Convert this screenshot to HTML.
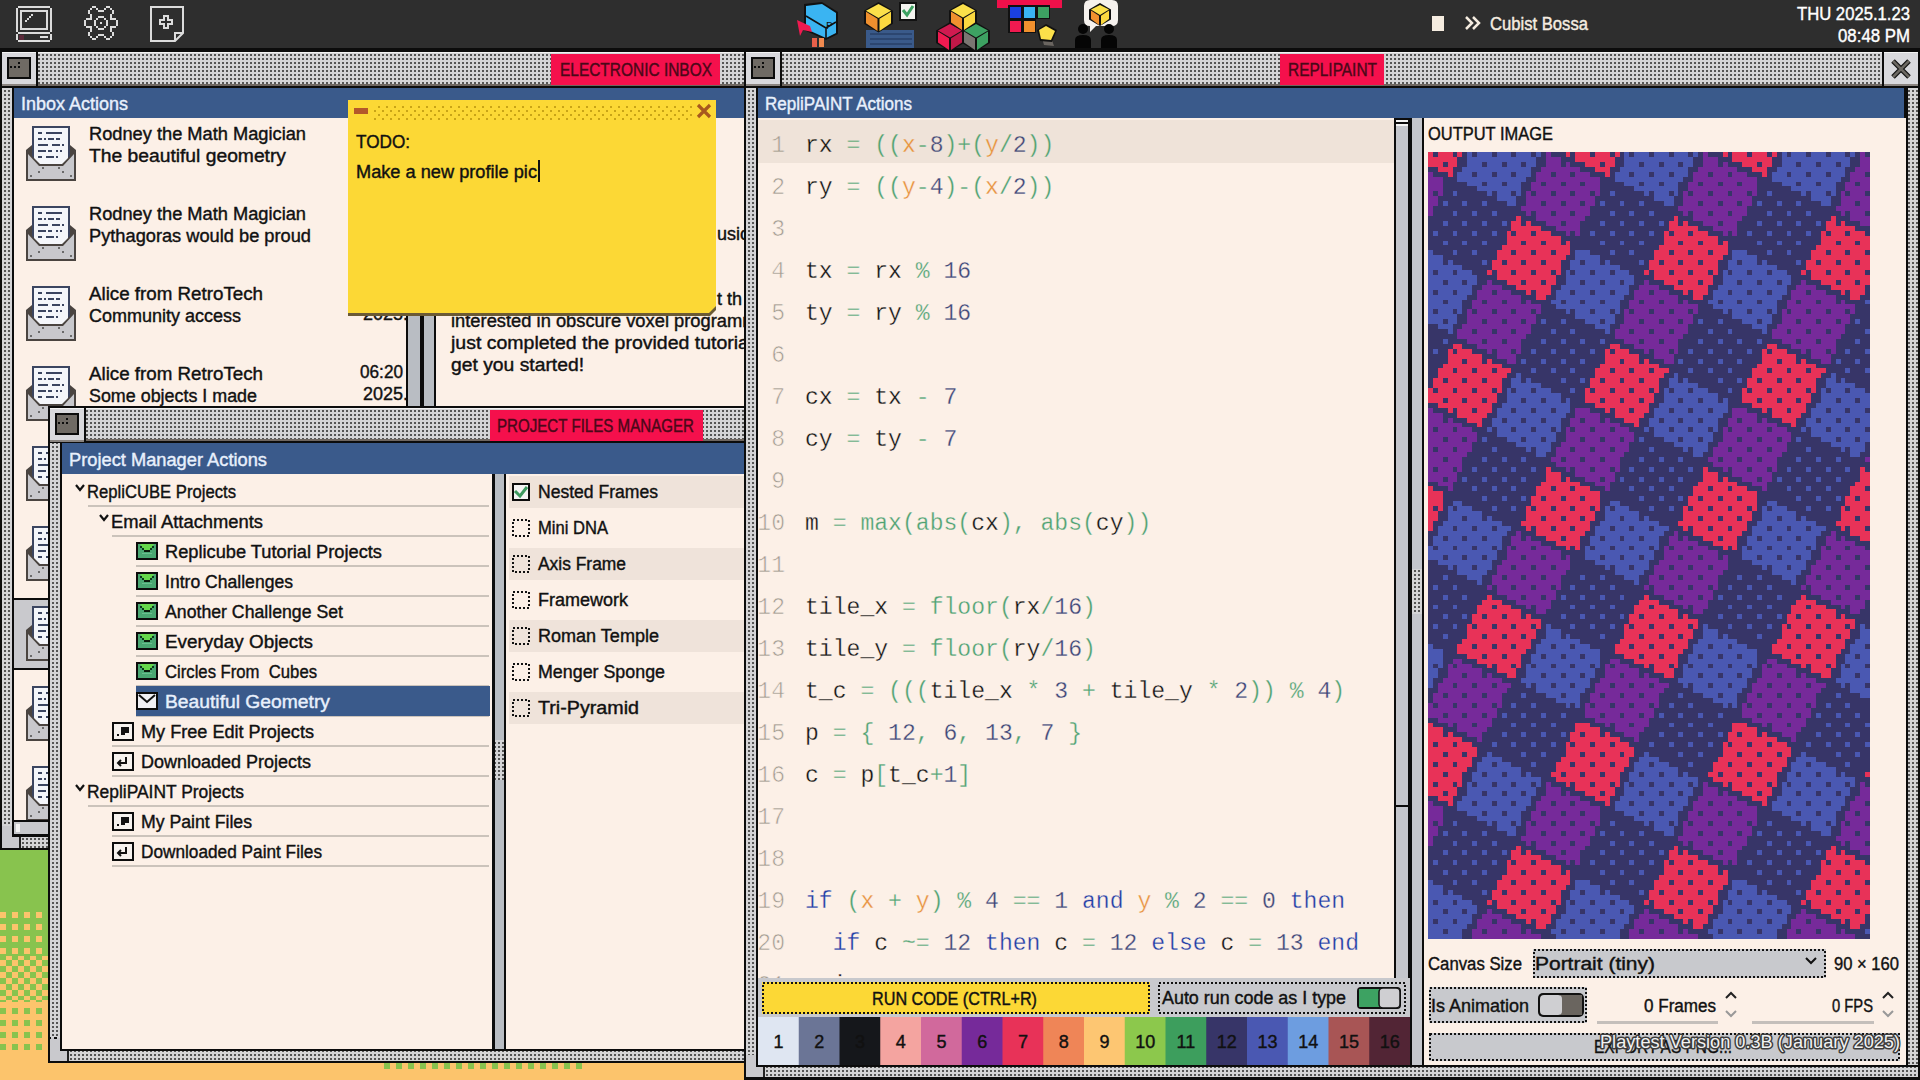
<!DOCTYPE html>
<html><head><meta charset="utf-8"><title>RepliPAINT Desktop</title>
<style>html,body{margin:0;padding:0;width:1920px;height:1080px;overflow:hidden;background:#2e2e2e;font-family:"Liberation Sans",sans-serif}svg{display:block}</style>
</head><body><svg width="1920" height="1080" viewBox="0 0 1920 1080"><defs>
<pattern id="dots" width="4" height="4" patternUnits="userSpaceOnUse"><rect width="4" height="4" fill="#d4d4d6"/><rect x="2" y="2" width="2" height="2" fill="#555"/></pattern>
<pattern id="dotsv" width="4" height="4" patternUnits="userSpaceOnUse"><rect width="4" height="4" fill="#d4d4d6"/><rect x="0" y="2" width="2" height="2" fill="#555"/></pattern>
<pattern id="ydots" width="8" height="8" patternUnits="userSpaceOnUse"><rect width="8" height="8" fill="#fcd835"/><rect x="2" y="2" width="2" height="2" fill="#c9a416"/><rect x="6" y="6" width="2" height="2" fill="#c9a416"/></pattern>
<pattern id="dfill" width="6" height="2" patternUnits="userSpaceOnUse"><rect width="3" height="2" fill="#111"/></pattern>
<pattern id="orgdots" width="12" height="12" patternUnits="userSpaceOnUse"><rect width="12" height="12" fill="#88c34e"/><rect x="0" y="0" width="6" height="6" fill="#fcc46c"/></pattern>
<pattern id="checker" width="12" height="12" patternUnits="userSpaceOnUse"><rect width="12" height="12" fill="#88c34e"/><rect x="0" y="0" width="6" height="6" fill="#fcc46c"/><rect x="6" y="6" width="6" height="6" fill="#fcc46c"/></pattern>
<pattern id="grndots" width="12" height="12" patternUnits="userSpaceOnUse"><rect width="12" height="12" fill="#fcc46c"/><rect x="0" y="0" width="6" height="6" fill="#88c34e"/></pattern>
<clipPath id="inboxclip"><rect x="14" y="118" width="730" height="702"/></clipPath>
<clipPath id="dateclip"><rect x="14" y="118" width="392" height="702"/></clipPath>
<clipPath id="codeclip"><rect x="758" y="118" width="636" height="860"/></clipPath>
</defs><rect x="0" y="0" width="1920" height="1080" fill="#fcc46c" /><rect x="0" y="850" width="48" height="62" fill="#88c34e" /><rect x="0" y="912" width="48" height="44" fill="url(#orgdots)" /><rect x="0" y="956" width="48" height="44" fill="url(#checker)" /><rect x="0" y="1000" width="48" height="56" fill="url(#grndots)" /><rect x="384" y="1063" width="6" height="6" fill="#88c34e" /><rect x="396" y="1063" width="6" height="6" fill="#88c34e" /><rect x="408" y="1063" width="6" height="6" fill="#88c34e" /><rect x="420" y="1063" width="6" height="6" fill="#88c34e" /><rect x="432" y="1063" width="6" height="6" fill="#88c34e" /><rect x="444" y="1063" width="6" height="6" fill="#88c34e" /><rect x="456" y="1063" width="6" height="6" fill="#88c34e" /><rect x="468" y="1063" width="6" height="6" fill="#88c34e" /><rect x="480" y="1063" width="6" height="6" fill="#88c34e" /><rect x="492" y="1063" width="6" height="6" fill="#88c34e" /><rect x="504" y="1063" width="6" height="6" fill="#88c34e" /><rect x="516" y="1063" width="6" height="6" fill="#88c34e" /><rect x="528" y="1063" width="6" height="6" fill="#88c34e" /><rect x="540" y="1063" width="6" height="6" fill="#88c34e" /><rect x="552" y="1063" width="6" height="6" fill="#88c34e" /><rect x="564" y="1063" width="6" height="6" fill="#88c34e" /><rect x="576" y="1063" width="6" height="6" fill="#88c34e" /><rect x="0" y="0" width="1920" height="48" fill="#2e2e2e" /><rect x="0" y="48" width="1920" height="4" fill="#0c0c0c" /><rect x="0" y="48" width="746" height="802" fill="#0c0c0c" /><rect x="2" y="52" width="742" height="34" fill="url(#dots)" /><rect x="2" y="52" width="742" height="1" fill="#f2f2f2" /><rect x="2" y="84" width="742" height="2" fill="#6e6660" /><rect x="2" y="52" width="34" height="34" fill="#d9d9dd" /><rect x="2" y="52" width="34" height="1" fill="#f4f4f4" /><rect x="2" y="84" width="34" height="2" fill="#8a8480" /><rect x="7" y="57" width="24" height="22" fill="#0c0c0c" /><rect x="9" y="59" width="20" height="18" fill="#6f6a64" /><rect x="14" y="66" width="2" height="2" fill="#0c0c0c" /><rect x="18" y="66" width="2" height="2" fill="#0c0c0c" /><rect x="18" y="62" width="2" height="2" fill="#0c0c0c" /><rect x="10" y="66" width="2" height="2" fill="#0c0c0c" /><rect x="36" y="52" width="2" height="34" fill="#0c0c0c" /><rect x="551" y="54" width="169" height="31" fill="#f5104c" /><text x="560" y="76" font-family="Liberation Sans" font-size="18" fill="#4a0818" textLength="152" lengthAdjust="spacingAndGlyphs"  stroke="#4a0818" stroke-width="0.4">ELECTRONIC INBOX</text><rect x="2" y="88" width="10" height="749" fill="url(#dotsv)" /><rect x="14" y="88" width="730" height="30" fill="#3a5a8b" /><text x="21" y="110" font-family="Liberation Sans" font-size="18" fill="#e8f0fc" textLength="107" lengthAdjust="spacingAndGlyphs"  stroke="#e8f0fc" stroke-width="0.4">Inbox Actions</text><rect x="14" y="118" width="730" height="702" fill="#fcf0e7" /><rect x="14" y="822" width="730" height="12" fill="#c7c8cc" /><rect x="16" y="824" width="4" height="8" fill="#f4f4f4" /><rect x="14" y="834" width="730" height="3" fill="#0c0c0c" /><rect x="2" y="837" width="742" height="11" fill="url(#dots)" /><rect x="2" y="826" width="10" height="22" fill="#c9c9cd" /><rect x="2" y="837" width="18" height="11" fill="#c9c9cd" /><rect x="19" y="837" width="2" height="11" fill="#222" /><rect x="12" y="820" width="2" height="17" fill="#0c0c0c" /><g clip-path="url(#inboxclip)"><rect x="14" y="598" width="392" height="72" fill="#c9c9cd" /><rect x="14" y="598" width="392" height="2" fill="#0c0c0c" /><rect x="14" y="668" width="392" height="2" fill="#0c0c0c" /><path d="M26 150 L32 145 L70 145 L76 150 L76 159 L26 159 Z" fill="#4a4440"/><rect x="32" y="126" width="38" height="40" fill="#3b4560" /><rect x="34" y="128" width="34" height="38" fill="#f4f6fa" /><rect x="38" y="132" width="4" height="2" fill="#3b4560" /><rect x="46" y="132" width="16" height="2" fill="#3b4560" /><rect x="38" y="138" width="4" height="2" fill="#3b4560" /><rect x="44" y="138" width="2" height="2" fill="#3b4560" /><rect x="48" y="138" width="6" height="2" fill="#3b4560" /><rect x="56" y="138" width="4" height="2" fill="#3b4560" /><rect x="38" y="144" width="10" height="2" fill="#3b4560" /><rect x="52" y="144" width="8" height="2" fill="#3b4560" /><rect x="62" y="144" width="2" height="2" fill="#3b4560" /><rect x="38" y="150" width="8" height="2" fill="#3b4560" /><rect x="48" y="150" width="4" height="2" fill="#3b4560" /><rect x="56" y="150" width="2" height="2" fill="#3b4560" /><rect x="60" y="150" width="2" height="2" fill="#3b4560" /><rect x="38" y="156" width="4" height="2" fill="#3b4560" /><rect x="46" y="156" width="8" height="2" fill="#3b4560" /><rect x="56" y="156" width="2" height="2" fill="#3b4560" /><path d="M26 150 L40 164 L62 164 L76 150 L76 181 L26 181 Z" fill="#4a4440"/><path d="M28 154 L39 166 L63 166 L74 154 L74 179 L28 179 Z" fill="#c8c8cc"/><rect x="30" y="175" width="2" height="2" fill="#6a6a6a" /><rect x="38" y="171" width="2" height="2" fill="#6a6a6a" /><rect x="42" y="167" width="2" height="2" fill="#6a6a6a" /><rect x="70" y="175" width="2" height="2" fill="#6a6a6a" /><rect x="62" y="171" width="2" height="2" fill="#6a6a6a" /><rect x="58" y="167" width="2" height="2" fill="#6a6a6a" /><text x="89" y="140" font-family="Liberation Sans" font-size="18" fill="#111" textLength="217" lengthAdjust="spacingAndGlyphs"  stroke="#111" stroke-width="0.4">Rodney the Math Magician</text><text x="89" y="162" font-family="Liberation Sans" font-size="18" fill="#111" textLength="197" lengthAdjust="spacingAndGlyphs"  stroke="#111" stroke-width="0.4">The beautiful geometry</text><path d="M26 230 L32 225 L70 225 L76 230 L76 239 L26 239 Z" fill="#4a4440"/><rect x="32" y="206" width="38" height="40" fill="#3b4560" /><rect x="34" y="208" width="34" height="38" fill="#f4f6fa" /><rect x="38" y="212" width="4" height="2" fill="#3b4560" /><rect x="46" y="212" width="16" height="2" fill="#3b4560" /><rect x="38" y="218" width="4" height="2" fill="#3b4560" /><rect x="44" y="218" width="2" height="2" fill="#3b4560" /><rect x="48" y="218" width="6" height="2" fill="#3b4560" /><rect x="56" y="218" width="4" height="2" fill="#3b4560" /><rect x="38" y="224" width="10" height="2" fill="#3b4560" /><rect x="52" y="224" width="8" height="2" fill="#3b4560" /><rect x="62" y="224" width="2" height="2" fill="#3b4560" /><rect x="38" y="230" width="8" height="2" fill="#3b4560" /><rect x="48" y="230" width="4" height="2" fill="#3b4560" /><rect x="56" y="230" width="2" height="2" fill="#3b4560" /><rect x="60" y="230" width="2" height="2" fill="#3b4560" /><rect x="38" y="236" width="4" height="2" fill="#3b4560" /><rect x="46" y="236" width="8" height="2" fill="#3b4560" /><rect x="56" y="236" width="2" height="2" fill="#3b4560" /><path d="M26 230 L40 244 L62 244 L76 230 L76 261 L26 261 Z" fill="#4a4440"/><path d="M28 234 L39 246 L63 246 L74 234 L74 259 L28 259 Z" fill="#c8c8cc"/><rect x="30" y="255" width="2" height="2" fill="#6a6a6a" /><rect x="38" y="251" width="2" height="2" fill="#6a6a6a" /><rect x="42" y="247" width="2" height="2" fill="#6a6a6a" /><rect x="70" y="255" width="2" height="2" fill="#6a6a6a" /><rect x="62" y="251" width="2" height="2" fill="#6a6a6a" /><rect x="58" y="247" width="2" height="2" fill="#6a6a6a" /><text x="89" y="220" font-family="Liberation Sans" font-size="18" fill="#111" textLength="217" lengthAdjust="spacingAndGlyphs"  stroke="#111" stroke-width="0.4">Rodney the Math Magician</text><text x="89" y="242" font-family="Liberation Sans" font-size="18" fill="#111" textLength="222" lengthAdjust="spacingAndGlyphs"  stroke="#111" stroke-width="0.4">Pythagoras would be proud</text><path d="M26 310 L32 305 L70 305 L76 310 L76 319 L26 319 Z" fill="#4a4440"/><rect x="32" y="286" width="38" height="40" fill="#3b4560" /><rect x="34" y="288" width="34" height="38" fill="#f4f6fa" /><rect x="38" y="292" width="4" height="2" fill="#3b4560" /><rect x="46" y="292" width="16" height="2" fill="#3b4560" /><rect x="38" y="298" width="4" height="2" fill="#3b4560" /><rect x="44" y="298" width="2" height="2" fill="#3b4560" /><rect x="48" y="298" width="6" height="2" fill="#3b4560" /><rect x="56" y="298" width="4" height="2" fill="#3b4560" /><rect x="38" y="304" width="10" height="2" fill="#3b4560" /><rect x="52" y="304" width="8" height="2" fill="#3b4560" /><rect x="62" y="304" width="2" height="2" fill="#3b4560" /><rect x="38" y="310" width="8" height="2" fill="#3b4560" /><rect x="48" y="310" width="4" height="2" fill="#3b4560" /><rect x="56" y="310" width="2" height="2" fill="#3b4560" /><rect x="60" y="310" width="2" height="2" fill="#3b4560" /><rect x="38" y="316" width="4" height="2" fill="#3b4560" /><rect x="46" y="316" width="8" height="2" fill="#3b4560" /><rect x="56" y="316" width="2" height="2" fill="#3b4560" /><path d="M26 310 L40 324 L62 324 L76 310 L76 341 L26 341 Z" fill="#4a4440"/><path d="M28 314 L39 326 L63 326 L74 314 L74 339 L28 339 Z" fill="#c8c8cc"/><rect x="30" y="335" width="2" height="2" fill="#6a6a6a" /><rect x="38" y="331" width="2" height="2" fill="#6a6a6a" /><rect x="42" y="327" width="2" height="2" fill="#6a6a6a" /><rect x="70" y="335" width="2" height="2" fill="#6a6a6a" /><rect x="62" y="331" width="2" height="2" fill="#6a6a6a" /><rect x="58" y="327" width="2" height="2" fill="#6a6a6a" /><text x="89" y="300" font-family="Liberation Sans" font-size="18" fill="#111" textLength="174" lengthAdjust="spacingAndGlyphs"  stroke="#111" stroke-width="0.4">Alice from RetroTech</text><text x="89" y="322" font-family="Liberation Sans" font-size="18" fill="#111" textLength="152" lengthAdjust="spacingAndGlyphs"  stroke="#111" stroke-width="0.4">Community access</text><path d="M26 390 L32 385 L70 385 L76 390 L76 399 L26 399 Z" fill="#4a4440"/><rect x="32" y="366" width="38" height="40" fill="#3b4560" /><rect x="34" y="368" width="34" height="38" fill="#f4f6fa" /><rect x="38" y="372" width="4" height="2" fill="#3b4560" /><rect x="46" y="372" width="16" height="2" fill="#3b4560" /><rect x="38" y="378" width="4" height="2" fill="#3b4560" /><rect x="44" y="378" width="2" height="2" fill="#3b4560" /><rect x="48" y="378" width="6" height="2" fill="#3b4560" /><rect x="56" y="378" width="4" height="2" fill="#3b4560" /><rect x="38" y="384" width="10" height="2" fill="#3b4560" /><rect x="52" y="384" width="8" height="2" fill="#3b4560" /><rect x="62" y="384" width="2" height="2" fill="#3b4560" /><rect x="38" y="390" width="8" height="2" fill="#3b4560" /><rect x="48" y="390" width="4" height="2" fill="#3b4560" /><rect x="56" y="390" width="2" height="2" fill="#3b4560" /><rect x="60" y="390" width="2" height="2" fill="#3b4560" /><rect x="38" y="396" width="4" height="2" fill="#3b4560" /><rect x="46" y="396" width="8" height="2" fill="#3b4560" /><rect x="56" y="396" width="2" height="2" fill="#3b4560" /><path d="M26 390 L40 404 L62 404 L76 390 L76 421 L26 421 Z" fill="#4a4440"/><path d="M28 394 L39 406 L63 406 L74 394 L74 419 L28 419 Z" fill="#c8c8cc"/><rect x="30" y="415" width="2" height="2" fill="#6a6a6a" /><rect x="38" y="411" width="2" height="2" fill="#6a6a6a" /><rect x="42" y="407" width="2" height="2" fill="#6a6a6a" /><rect x="70" y="415" width="2" height="2" fill="#6a6a6a" /><rect x="62" y="411" width="2" height="2" fill="#6a6a6a" /><rect x="58" y="407" width="2" height="2" fill="#6a6a6a" /><text x="89" y="380" font-family="Liberation Sans" font-size="18" fill="#111" textLength="174" lengthAdjust="spacingAndGlyphs"  stroke="#111" stroke-width="0.4">Alice from RetroTech</text><text x="89" y="402" font-family="Liberation Sans" font-size="18" fill="#111" textLength="168" lengthAdjust="spacingAndGlyphs"  stroke="#111" stroke-width="0.4">Some objects I made</text><path d="M26 470 L32 465 L70 465 L76 470 L76 479 L26 479 Z" fill="#4a4440"/><rect x="32" y="446" width="38" height="40" fill="#3b4560" /><rect x="34" y="448" width="34" height="38" fill="#f4f6fa" /><rect x="38" y="452" width="4" height="2" fill="#3b4560" /><rect x="46" y="452" width="16" height="2" fill="#3b4560" /><rect x="38" y="458" width="4" height="2" fill="#3b4560" /><rect x="44" y="458" width="2" height="2" fill="#3b4560" /><rect x="48" y="458" width="6" height="2" fill="#3b4560" /><rect x="56" y="458" width="4" height="2" fill="#3b4560" /><rect x="38" y="464" width="10" height="2" fill="#3b4560" /><rect x="52" y="464" width="8" height="2" fill="#3b4560" /><rect x="62" y="464" width="2" height="2" fill="#3b4560" /><rect x="38" y="470" width="8" height="2" fill="#3b4560" /><rect x="48" y="470" width="4" height="2" fill="#3b4560" /><rect x="56" y="470" width="2" height="2" fill="#3b4560" /><rect x="60" y="470" width="2" height="2" fill="#3b4560" /><rect x="38" y="476" width="4" height="2" fill="#3b4560" /><rect x="46" y="476" width="8" height="2" fill="#3b4560" /><rect x="56" y="476" width="2" height="2" fill="#3b4560" /><path d="M26 470 L40 484 L62 484 L76 470 L76 501 L26 501 Z" fill="#4a4440"/><path d="M28 474 L39 486 L63 486 L74 474 L74 499 L28 499 Z" fill="#c8c8cc"/><rect x="30" y="495" width="2" height="2" fill="#6a6a6a" /><rect x="38" y="491" width="2" height="2" fill="#6a6a6a" /><rect x="42" y="487" width="2" height="2" fill="#6a6a6a" /><rect x="70" y="495" width="2" height="2" fill="#6a6a6a" /><rect x="62" y="491" width="2" height="2" fill="#6a6a6a" /><rect x="58" y="487" width="2" height="2" fill="#6a6a6a" /><path d="M26 550 L32 545 L70 545 L76 550 L76 559 L26 559 Z" fill="#4a4440"/><rect x="32" y="526" width="38" height="40" fill="#3b4560" /><rect x="34" y="528" width="34" height="38" fill="#f4f6fa" /><rect x="38" y="532" width="4" height="2" fill="#3b4560" /><rect x="46" y="532" width="16" height="2" fill="#3b4560" /><rect x="38" y="538" width="4" height="2" fill="#3b4560" /><rect x="44" y="538" width="2" height="2" fill="#3b4560" /><rect x="48" y="538" width="6" height="2" fill="#3b4560" /><rect x="56" y="538" width="4" height="2" fill="#3b4560" /><rect x="38" y="544" width="10" height="2" fill="#3b4560" /><rect x="52" y="544" width="8" height="2" fill="#3b4560" /><rect x="62" y="544" width="2" height="2" fill="#3b4560" /><rect x="38" y="550" width="8" height="2" fill="#3b4560" /><rect x="48" y="550" width="4" height="2" fill="#3b4560" /><rect x="56" y="550" width="2" height="2" fill="#3b4560" /><rect x="60" y="550" width="2" height="2" fill="#3b4560" /><rect x="38" y="556" width="4" height="2" fill="#3b4560" /><rect x="46" y="556" width="8" height="2" fill="#3b4560" /><rect x="56" y="556" width="2" height="2" fill="#3b4560" /><path d="M26 550 L40 564 L62 564 L76 550 L76 581 L26 581 Z" fill="#4a4440"/><path d="M28 554 L39 566 L63 566 L74 554 L74 579 L28 579 Z" fill="#c8c8cc"/><rect x="30" y="575" width="2" height="2" fill="#6a6a6a" /><rect x="38" y="571" width="2" height="2" fill="#6a6a6a" /><rect x="42" y="567" width="2" height="2" fill="#6a6a6a" /><rect x="70" y="575" width="2" height="2" fill="#6a6a6a" /><rect x="62" y="571" width="2" height="2" fill="#6a6a6a" /><rect x="58" y="567" width="2" height="2" fill="#6a6a6a" /><path d="M26 630 L32 625 L70 625 L76 630 L76 639 L26 639 Z" fill="#4a4440"/><rect x="32" y="606" width="38" height="40" fill="#3b4560" /><rect x="34" y="608" width="34" height="38" fill="#f4f6fa" /><rect x="38" y="612" width="4" height="2" fill="#3b4560" /><rect x="46" y="612" width="16" height="2" fill="#3b4560" /><rect x="38" y="618" width="4" height="2" fill="#3b4560" /><rect x="44" y="618" width="2" height="2" fill="#3b4560" /><rect x="48" y="618" width="6" height="2" fill="#3b4560" /><rect x="56" y="618" width="4" height="2" fill="#3b4560" /><rect x="38" y="624" width="10" height="2" fill="#3b4560" /><rect x="52" y="624" width="8" height="2" fill="#3b4560" /><rect x="62" y="624" width="2" height="2" fill="#3b4560" /><rect x="38" y="630" width="8" height="2" fill="#3b4560" /><rect x="48" y="630" width="4" height="2" fill="#3b4560" /><rect x="56" y="630" width="2" height="2" fill="#3b4560" /><rect x="60" y="630" width="2" height="2" fill="#3b4560" /><rect x="38" y="636" width="4" height="2" fill="#3b4560" /><rect x="46" y="636" width="8" height="2" fill="#3b4560" /><rect x="56" y="636" width="2" height="2" fill="#3b4560" /><path d="M26 630 L40 644 L62 644 L76 630 L76 661 L26 661 Z" fill="#4a4440"/><path d="M28 634 L39 646 L63 646 L74 634 L74 659 L28 659 Z" fill="#c8c8cc"/><rect x="30" y="655" width="2" height="2" fill="#6a6a6a" /><rect x="38" y="651" width="2" height="2" fill="#6a6a6a" /><rect x="42" y="647" width="2" height="2" fill="#6a6a6a" /><rect x="70" y="655" width="2" height="2" fill="#6a6a6a" /><rect x="62" y="651" width="2" height="2" fill="#6a6a6a" /><rect x="58" y="647" width="2" height="2" fill="#6a6a6a" /><path d="M26 710 L32 705 L70 705 L76 710 L76 719 L26 719 Z" fill="#4a4440"/><rect x="32" y="686" width="38" height="40" fill="#3b4560" /><rect x="34" y="688" width="34" height="38" fill="#f4f6fa" /><rect x="38" y="692" width="4" height="2" fill="#3b4560" /><rect x="46" y="692" width="16" height="2" fill="#3b4560" /><rect x="38" y="698" width="4" height="2" fill="#3b4560" /><rect x="44" y="698" width="2" height="2" fill="#3b4560" /><rect x="48" y="698" width="6" height="2" fill="#3b4560" /><rect x="56" y="698" width="4" height="2" fill="#3b4560" /><rect x="38" y="704" width="10" height="2" fill="#3b4560" /><rect x="52" y="704" width="8" height="2" fill="#3b4560" /><rect x="62" y="704" width="2" height="2" fill="#3b4560" /><rect x="38" y="710" width="8" height="2" fill="#3b4560" /><rect x="48" y="710" width="4" height="2" fill="#3b4560" /><rect x="56" y="710" width="2" height="2" fill="#3b4560" /><rect x="60" y="710" width="2" height="2" fill="#3b4560" /><rect x="38" y="716" width="4" height="2" fill="#3b4560" /><rect x="46" y="716" width="8" height="2" fill="#3b4560" /><rect x="56" y="716" width="2" height="2" fill="#3b4560" /><path d="M26 710 L40 724 L62 724 L76 710 L76 741 L26 741 Z" fill="#4a4440"/><path d="M28 714 L39 726 L63 726 L74 714 L74 739 L28 739 Z" fill="#c8c8cc"/><rect x="30" y="735" width="2" height="2" fill="#6a6a6a" /><rect x="38" y="731" width="2" height="2" fill="#6a6a6a" /><rect x="42" y="727" width="2" height="2" fill="#6a6a6a" /><rect x="70" y="735" width="2" height="2" fill="#6a6a6a" /><rect x="62" y="731" width="2" height="2" fill="#6a6a6a" /><rect x="58" y="727" width="2" height="2" fill="#6a6a6a" /><path d="M26 790 L32 785 L70 785 L76 790 L76 799 L26 799 Z" fill="#4a4440"/><rect x="32" y="766" width="38" height="40" fill="#3b4560" /><rect x="34" y="768" width="34" height="38" fill="#f4f6fa" /><rect x="38" y="772" width="4" height="2" fill="#3b4560" /><rect x="46" y="772" width="16" height="2" fill="#3b4560" /><rect x="38" y="778" width="4" height="2" fill="#3b4560" /><rect x="44" y="778" width="2" height="2" fill="#3b4560" /><rect x="48" y="778" width="6" height="2" fill="#3b4560" /><rect x="56" y="778" width="4" height="2" fill="#3b4560" /><rect x="38" y="784" width="10" height="2" fill="#3b4560" /><rect x="52" y="784" width="8" height="2" fill="#3b4560" /><rect x="62" y="784" width="2" height="2" fill="#3b4560" /><rect x="38" y="790" width="8" height="2" fill="#3b4560" /><rect x="48" y="790" width="4" height="2" fill="#3b4560" /><rect x="56" y="790" width="2" height="2" fill="#3b4560" /><rect x="60" y="790" width="2" height="2" fill="#3b4560" /><rect x="38" y="796" width="4" height="2" fill="#3b4560" /><rect x="46" y="796" width="8" height="2" fill="#3b4560" /><rect x="56" y="796" width="2" height="2" fill="#3b4560" /><path d="M26 790 L40 804 L62 804 L76 790 L76 821 L26 821 Z" fill="#4a4440"/><path d="M28 794 L39 806 L63 806 L74 794 L74 819 L28 819 Z" fill="#c8c8cc"/><rect x="30" y="815" width="2" height="2" fill="#6a6a6a" /><rect x="38" y="811" width="2" height="2" fill="#6a6a6a" /><rect x="42" y="807" width="2" height="2" fill="#6a6a6a" /><rect x="70" y="815" width="2" height="2" fill="#6a6a6a" /><rect x="62" y="811" width="2" height="2" fill="#6a6a6a" /><rect x="58" y="807" width="2" height="2" fill="#6a6a6a" /><g clip-path="url(#dateclip)"><text x="360" y="378" font-family="Liberation Sans" font-size="18" fill="#111" textLength="43" lengthAdjust="spacingAndGlyphs"  stroke="#111" stroke-width="0.4">06:20</text><text x="363" y="400" font-family="Liberation Sans" font-size="18" fill="#111" textLength="45" lengthAdjust="spacingAndGlyphs"  stroke="#111" stroke-width="0.4">2025.</text><text x="360" y="298" font-family="Liberation Sans" font-size="18" fill="#111" textLength="43" lengthAdjust="spacingAndGlyphs"  stroke="#111" stroke-width="0.4">06:20</text><text x="363" y="320" font-family="Liberation Sans" font-size="18" fill="#111" textLength="45" lengthAdjust="spacingAndGlyphs"  stroke="#111" stroke-width="0.4">2025.</text></g><rect x="406" y="118" width="30" height="702" fill="#b9bdc3" /><rect x="406" y="118" width="2" height="702" fill="#0c0c0c" /><rect x="420" y="118" width="4" height="702" fill="#0c0c0c" /><rect x="434" y="118" width="2" height="702" fill="#0c0c0c" /><text x="717" y="240" font-family="Liberation Sans" font-size="18" fill="#111"  stroke="#111" stroke-width="0.4">usic</text><text x="717" y="305" font-family="Liberation Sans" font-size="18" fill="#111"  stroke="#111" stroke-width="0.4">t th</text><text x="451" y="327" font-family="Liberation Sans" font-size="18" fill="#111" textLength="331" lengthAdjust="spacingAndGlyphs"  stroke="#111" stroke-width="0.4">interested in obscure voxel programming</text><text x="451" y="349" font-family="Liberation Sans" font-size="18" fill="#111" textLength="312" lengthAdjust="spacingAndGlyphs"  stroke="#111" stroke-width="0.4">just completed the provided tutorials</text><text x="451" y="371" font-family="Liberation Sans" font-size="18" fill="#111" textLength="133" lengthAdjust="spacingAndGlyphs"  stroke="#111" stroke-width="0.4">get you started!</text></g><path d="M348 103 H716 V310 L710 316 H348 Z" fill="#6b5a35"/><path d="M348 100 H716 V306 L709 313 H348 Z" fill="#fcd835"/><rect x="374" y="106" width="318" height="14" fill="url(#ydots)" /><rect x="354" y="108" width="14" height="6" fill="#b4582a" /><path d="M698 105 L710 117 M710 105 L698 117" stroke="#a8581e" stroke-width="3.2"/><text x="356" y="148" font-family="Liberation Sans" font-size="18" fill="#111" textLength="54" lengthAdjust="spacingAndGlyphs"  stroke="#111" stroke-width="0.4">TODO:</text><text x="356" y="178" font-family="Liberation Sans" font-size="18" fill="#111" textLength="181" lengthAdjust="spacingAndGlyphs"  stroke="#111" stroke-width="0.4">Make a new profile pic</text><rect x="538" y="160" width="2" height="22" fill="#111" /><rect x="48" y="406" width="712" height="657" fill="#0c0c0c" /><rect x="50" y="408" width="694" height="33" fill="url(#dots)" /><rect x="50" y="408" width="694" height="1" fill="#f2f2f2" /><rect x="50" y="439" width="694" height="2" fill="#6e6660" /><rect x="50" y="408" width="34" height="34" fill="#d9d9dd" /><rect x="50" y="408" width="34" height="1" fill="#f4f4f4" /><rect x="50" y="440" width="34" height="2" fill="#8a8480" /><rect x="55" y="413" width="24" height="22" fill="#0c0c0c" /><rect x="57" y="415" width="20" height="18" fill="#6f6a64" /><rect x="62" y="422" width="2" height="2" fill="#0c0c0c" /><rect x="66" y="422" width="2" height="2" fill="#0c0c0c" /><rect x="66" y="418" width="2" height="2" fill="#0c0c0c" /><rect x="58" y="422" width="2" height="2" fill="#0c0c0c" /><rect x="84" y="408" width="2" height="33" fill="#0c0c0c" /><rect x="490" y="410" width="213" height="31" fill="#f5104c" /><text x="497" y="432" font-family="Liberation Sans" font-size="18" fill="#4a0818" textLength="197" lengthAdjust="spacingAndGlyphs"  stroke="#4a0818" stroke-width="0.4">PROJECT FILES MANAGER</text><rect x="50" y="443" width="10" height="608" fill="url(#dotsv)" /><rect x="62" y="443" width="682" height="31" fill="#3a5a8b" /><text x="69" y="466" font-family="Liberation Sans" font-size="18" fill="#e8f0fc" textLength="198" lengthAdjust="spacingAndGlyphs"  stroke="#e8f0fc" stroke-width="0.4">Project Manager Actions</text><rect x="62" y="474" width="682" height="575" fill="#fcf0e7" /><rect x="50" y="1051" width="694" height="10" fill="url(#dots)" /><rect x="50" y="1038" width="10" height="23" fill="#c9c9cd" /><rect x="50" y="1051" width="18" height="10" fill="#c9c9cd" /><rect x="50" y="1037" width="10" height="2" fill="url(#dfill)" /><rect x="67" y="1051" width="2" height="10" fill="#222" /><rect x="88" y="505" width="401" height="2" fill="#cbc3bb" /><path d="M76 485 L80 490 L84 485" fill="none" stroke="#111" stroke-width="2.2"/><text x="87" y="498" font-family="Liberation Sans" font-size="18" fill="#111" textLength="149" lengthAdjust="spacingAndGlyphs" xml:space="preserve" stroke="#111" stroke-width="0.4">RepliCUBE Projects</text><rect x="112" y="535" width="377" height="2" fill="#cbc3bb" /><path d="M100 515 L104 520 L108 515" fill="none" stroke="#111" stroke-width="2.2"/><text x="111" y="528" font-family="Liberation Sans" font-size="18" fill="#111" textLength="152" lengthAdjust="spacingAndGlyphs" xml:space="preserve" stroke="#111" stroke-width="0.4">Email Attachments</text><rect x="136" y="565" width="353" height="2" fill="#cbc3bb" /><rect x="136" y="542" width="22" height="18" fill="#0c0c0c" /><rect x="138" y="544" width="18" height="14" fill="#4aa872" /><path d="M140 544 H154 L150 550 H144 Z" fill="#66d84a"/><rect x="144" y="550" width="6" height="2" fill="#0a1a0a" /><rect x="140" y="546" width="2" height="2" fill="#0a3a1a" /><rect x="142" y="548" width="2" height="2" fill="#0a3a1a" /><rect x="152" y="546" width="2" height="2" fill="#0a3a1a" /><rect x="150" y="548" width="2" height="2" fill="#0a3a1a" /><rect x="142" y="553" width="10" height="1" fill="#6ac090" /><text x="165" y="558" font-family="Liberation Sans" font-size="18" fill="#111" textLength="217" lengthAdjust="spacingAndGlyphs" xml:space="preserve" stroke="#111" stroke-width="0.4">Replicube Tutorial Projects</text><rect x="136" y="595" width="353" height="2" fill="#cbc3bb" /><rect x="136" y="572" width="22" height="18" fill="#0c0c0c" /><rect x="138" y="574" width="18" height="14" fill="#4aa872" /><path d="M140 574 H154 L150 580 H144 Z" fill="#66d84a"/><rect x="144" y="580" width="6" height="2" fill="#0a1a0a" /><rect x="140" y="576" width="2" height="2" fill="#0a3a1a" /><rect x="142" y="578" width="2" height="2" fill="#0a3a1a" /><rect x="152" y="576" width="2" height="2" fill="#0a3a1a" /><rect x="150" y="578" width="2" height="2" fill="#0a3a1a" /><rect x="142" y="583" width="10" height="1" fill="#6ac090" /><text x="165" y="588" font-family="Liberation Sans" font-size="18" fill="#111" textLength="128" lengthAdjust="spacingAndGlyphs" xml:space="preserve" stroke="#111" stroke-width="0.4">Intro Challenges</text><rect x="136" y="625" width="353" height="2" fill="#cbc3bb" /><rect x="136" y="602" width="22" height="18" fill="#0c0c0c" /><rect x="138" y="604" width="18" height="14" fill="#4aa872" /><path d="M140 604 H154 L150 610 H144 Z" fill="#66d84a"/><rect x="144" y="610" width="6" height="2" fill="#0a1a0a" /><rect x="140" y="606" width="2" height="2" fill="#0a3a1a" /><rect x="142" y="608" width="2" height="2" fill="#0a3a1a" /><rect x="152" y="606" width="2" height="2" fill="#0a3a1a" /><rect x="150" y="608" width="2" height="2" fill="#0a3a1a" /><rect x="142" y="613" width="10" height="1" fill="#6ac090" /><text x="165" y="618" font-family="Liberation Sans" font-size="18" fill="#111" textLength="178" lengthAdjust="spacingAndGlyphs" xml:space="preserve" stroke="#111" stroke-width="0.4">Another Challenge Set</text><rect x="136" y="655" width="353" height="2" fill="#cbc3bb" /><rect x="136" y="632" width="22" height="18" fill="#0c0c0c" /><rect x="138" y="634" width="18" height="14" fill="#4aa872" /><path d="M140 634 H154 L150 640 H144 Z" fill="#66d84a"/><rect x="144" y="640" width="6" height="2" fill="#0a1a0a" /><rect x="140" y="636" width="2" height="2" fill="#0a3a1a" /><rect x="142" y="638" width="2" height="2" fill="#0a3a1a" /><rect x="152" y="636" width="2" height="2" fill="#0a3a1a" /><rect x="150" y="638" width="2" height="2" fill="#0a3a1a" /><rect x="142" y="643" width="10" height="1" fill="#6ac090" /><text x="165" y="648" font-family="Liberation Sans" font-size="18" fill="#111" textLength="148" lengthAdjust="spacingAndGlyphs" xml:space="preserve" stroke="#111" stroke-width="0.4">Everyday Objects</text><rect x="136" y="685" width="353" height="2" fill="#cbc3bb" /><rect x="136" y="662" width="22" height="18" fill="#0c0c0c" /><rect x="138" y="664" width="18" height="14" fill="#4aa872" /><path d="M140 664 H154 L150 670 H144 Z" fill="#66d84a"/><rect x="144" y="670" width="6" height="2" fill="#0a1a0a" /><rect x="140" y="666" width="2" height="2" fill="#0a3a1a" /><rect x="142" y="668" width="2" height="2" fill="#0a3a1a" /><rect x="152" y="666" width="2" height="2" fill="#0a3a1a" /><rect x="150" y="668" width="2" height="2" fill="#0a3a1a" /><rect x="142" y="673" width="10" height="1" fill="#6ac090" /><text x="165" y="678" font-family="Liberation Sans" font-size="18" fill="#111" textLength="152" lengthAdjust="spacingAndGlyphs" xml:space="preserve" stroke="#111" stroke-width="0.4">Circles From  Cubes</text><rect x="136" y="715" width="353" height="2" fill="#cbc3bb" /><rect x="136" y="686" width="354" height="30" fill="#3a5a8b" /><rect x="136" y="692" width="22" height="18" fill="#0c0c0c" /><rect x="138" y="694" width="18" height="14" fill="#f0f0f4" /><path d="M139 695 L147 702 L155 695" fill="none" stroke="#111" stroke-width="2"/><text x="165" y="708" font-family="Liberation Sans" font-size="18" fill="#e8f0fc" textLength="165" lengthAdjust="spacingAndGlyphs" xml:space="preserve" stroke="#e8f0fc" stroke-width="0.4">Beautiful Geometry</text><rect x="112" y="745" width="377" height="2" fill="#cbc3bb" /><rect x="112" y="722" width="22" height="19" fill="#0c0c0c" /><rect x="114" y="724" width="18" height="15" fill="#f6f2ee" /><path d="M121 727 h8 v6 h-4 v2 h-4 Z" fill="#111"/><rect x="117" y="734" width="2" height="2" fill="#111" /><text x="141" y="738" font-family="Liberation Sans" font-size="18" fill="#111" textLength="173" lengthAdjust="spacingAndGlyphs" xml:space="preserve" stroke="#111" stroke-width="0.4">My Free Edit Projects</text><rect x="112" y="775" width="377" height="2" fill="#cbc3bb" /><rect x="112" y="752" width="22" height="19" fill="#0c0c0c" /><rect x="114" y="754" width="18" height="15" fill="#f6f2ee" /><path d="M126 757 v6 h-8 M121 760 l-3 3 l3 3" fill="none" stroke="#111" stroke-width="2"/><text x="141" y="768" font-family="Liberation Sans" font-size="18" fill="#111" textLength="170" lengthAdjust="spacingAndGlyphs" xml:space="preserve" stroke="#111" stroke-width="0.4">Downloaded Projects</text><rect x="88" y="805" width="401" height="2" fill="#cbc3bb" /><path d="M76 785 L80 790 L84 785" fill="none" stroke="#111" stroke-width="2.2"/><text x="87" y="798" font-family="Liberation Sans" font-size="18" fill="#111" textLength="157" lengthAdjust="spacingAndGlyphs" xml:space="preserve" stroke="#111" stroke-width="0.4">RepliPAINT Projects</text><rect x="112" y="835" width="377" height="2" fill="#cbc3bb" /><rect x="112" y="812" width="22" height="19" fill="#0c0c0c" /><rect x="114" y="814" width="18" height="15" fill="#f6f2ee" /><path d="M121 817 h8 v6 h-4 v2 h-4 Z" fill="#111"/><rect x="117" y="824" width="2" height="2" fill="#111" /><text x="141" y="828" font-family="Liberation Sans" font-size="18" fill="#111" textLength="111" lengthAdjust="spacingAndGlyphs" xml:space="preserve" stroke="#111" stroke-width="0.4">My Paint Files</text><rect x="112" y="865" width="377" height="2" fill="#cbc3bb" /><rect x="112" y="842" width="22" height="19" fill="#0c0c0c" /><rect x="114" y="844" width="18" height="15" fill="#f6f2ee" /><path d="M126 847 v6 h-8 M121 850 l-3 3 l3 3" fill="none" stroke="#111" stroke-width="2"/><text x="141" y="858" font-family="Liberation Sans" font-size="18" fill="#111" textLength="181" lengthAdjust="spacingAndGlyphs" xml:space="preserve" stroke="#111" stroke-width="0.4">Downloaded Paint Files</text><rect x="492" y="474" width="14" height="575" fill="#b9bdc3" /><rect x="492" y="474" width="3" height="575" fill="#0c0c0c" /><rect x="504" y="474" width="2" height="575" fill="#0c0c0c" /><rect x="495" y="740" width="9" height="40" fill="url(#dots)" /><rect x="509" y="476" width="235" height="32" fill="#efe3da" /><rect x="512" y="483" width="18" height="18" fill="#0c0c0c" /><rect x="514" y="485" width="14" height="14" fill="#f4f4f4" /><path d="M515 491 L520 496 L527 487" fill="none" stroke="#3e9a60" stroke-width="3"/><text x="538" y="498" font-family="Liberation Sans" font-size="18" fill="#111" textLength="120" lengthAdjust="spacingAndGlyphs"  stroke="#111" stroke-width="0.4">Nested Frames</text><rect x="513" y="520" width="16" height="16" fill="none" stroke="#111" stroke-width="2" stroke-dasharray="2 2"/><text x="538" y="534" font-family="Liberation Sans" font-size="18" fill="#111" textLength="70" lengthAdjust="spacingAndGlyphs"  stroke="#111" stroke-width="0.4">Mini DNA</text><rect x="509" y="548" width="235" height="32" fill="#efe3da" /><rect x="513" y="556" width="16" height="16" fill="none" stroke="#111" stroke-width="2" stroke-dasharray="2 2"/><text x="538" y="570" font-family="Liberation Sans" font-size="18" fill="#111" textLength="88" lengthAdjust="spacingAndGlyphs"  stroke="#111" stroke-width="0.4">Axis Frame</text><rect x="513" y="592" width="16" height="16" fill="none" stroke="#111" stroke-width="2" stroke-dasharray="2 2"/><text x="538" y="606" font-family="Liberation Sans" font-size="18" fill="#111" textLength="90" lengthAdjust="spacingAndGlyphs"  stroke="#111" stroke-width="0.4">Framework</text><rect x="509" y="620" width="235" height="32" fill="#efe3da" /><rect x="513" y="628" width="16" height="16" fill="none" stroke="#111" stroke-width="2" stroke-dasharray="2 2"/><text x="538" y="642" font-family="Liberation Sans" font-size="18" fill="#111" textLength="121" lengthAdjust="spacingAndGlyphs"  stroke="#111" stroke-width="0.4">Roman Temple</text><rect x="513" y="664" width="16" height="16" fill="none" stroke="#111" stroke-width="2" stroke-dasharray="2 2"/><text x="538" y="678" font-family="Liberation Sans" font-size="18" fill="#111" textLength="127" lengthAdjust="spacingAndGlyphs"  stroke="#111" stroke-width="0.4">Menger Sponge</text><rect x="509" y="692" width="235" height="32" fill="#efe3da" /><rect x="513" y="700" width="16" height="16" fill="none" stroke="#111" stroke-width="2" stroke-dasharray="2 2"/><text x="538" y="714" font-family="Liberation Sans" font-size="18" fill="#111" textLength="101" lengthAdjust="spacingAndGlyphs"  stroke="#111" stroke-width="0.4">Tri-Pyramid</text><rect x="744" y="48" width="1176" height="1032" fill="#0c0c0c" /><rect x="746" y="52" width="1172" height="34" fill="url(#dots)" /><rect x="746" y="52" width="1172" height="1" fill="#f2f2f2" /><rect x="746" y="84" width="1172" height="2" fill="#6e6660" /><rect x="746" y="52" width="34" height="34" fill="#d9d9dd" /><rect x="746" y="52" width="34" height="1" fill="#f4f4f4" /><rect x="746" y="84" width="34" height="2" fill="#8a8480" /><rect x="751" y="57" width="24" height="22" fill="#0c0c0c" /><rect x="753" y="59" width="20" height="18" fill="#6f6a64" /><rect x="758" y="66" width="2" height="2" fill="#0c0c0c" /><rect x="762" y="66" width="2" height="2" fill="#0c0c0c" /><rect x="762" y="62" width="2" height="2" fill="#0c0c0c" /><rect x="754" y="66" width="2" height="2" fill="#0c0c0c" /><rect x="780" y="52" width="2" height="34" fill="#0c0c0c" /><rect x="1280" y="54" width="104" height="31" fill="#f5104c" /><text x="1288" y="76" font-family="Liberation Sans" font-size="18" fill="#4a0818" textLength="89" lengthAdjust="spacingAndGlyphs"  stroke="#4a0818" stroke-width="0.4">REPLIPAINT</text><rect x="1882" y="52" width="2" height="34" fill="#0c0c0c" /><rect x="1884" y="52" width="34" height="34" fill="#d9d9dd" /><rect x="1884" y="52" width="34" height="1" fill="#f4f4f4" /><rect x="1884" y="84" width="34" height="2" fill="#8a8480" /><path d="M1893 61 L1909 77 M1909 61 L1893 77" stroke="#111" stroke-width="5"/><path d="M1893 61 L1909 77 M1909 61 L1893 77" stroke="#6c6862" stroke-width="2.5"/><rect x="746" y="88" width="10" height="977" fill="url(#dotsv)" /><rect x="1908" y="88" width="10" height="977" fill="url(#dotsv)" /><rect x="746" y="1067" width="1172" height="10" fill="url(#dots)" /><rect x="746" y="1055" width="10" height="22" fill="#c9c9cd" /><rect x="746" y="1067" width="18" height="10" fill="#c9c9cd" /><rect x="763" y="1067" width="2" height="10" fill="#222" /><rect x="758" y="88" width="1146" height="30" fill="#3a5a8b" /><text x="765" y="110" font-family="Liberation Sans" font-size="18" fill="#e8f0fc" textLength="147" lengthAdjust="spacingAndGlyphs"  stroke="#e8f0fc" stroke-width="0.4">RepliPAINT Actions</text><rect x="758" y="118" width="1148" height="947" fill="#fcf0e7" /><rect x="758" y="120" width="636" height="43" fill="#efe3d9" /><g clip-path="url(#codeclip)"><text x="785" y="152" font-family="Liberation Mono" font-size="23.1" fill="#a39c92" text-anchor="end" stroke="#efe3d9" stroke-width="0.6">1</text><text x="805.00" y="152" font-family="Liberation Mono" font-size="23.1" fill="#141414" stroke="#efe3d9" stroke-width="0.3" textLength="27.70" lengthAdjust="spacingAndGlyphs">rx</text><text x="846.55" y="152" font-family="Liberation Mono" font-size="23.1" fill="#4ea272" stroke="#efe3d9" stroke-width="0.3" textLength="13.85" lengthAdjust="spacingAndGlyphs">=</text><text x="874.25" y="152" font-family="Liberation Mono" font-size="23.1" fill="#4ea272" stroke="#efe3d9" stroke-width="0.3" textLength="13.85" lengthAdjust="spacingAndGlyphs">(</text><text x="888.10" y="152" font-family="Liberation Mono" font-size="23.1" fill="#4ea272" stroke="#efe3d9" stroke-width="0.3" textLength="13.85" lengthAdjust="spacingAndGlyphs">(</text><text x="901.95" y="152" font-family="Liberation Mono" font-size="23.1" fill="#e8923e" stroke="#efe3d9" stroke-width="0.3" textLength="13.85" lengthAdjust="spacingAndGlyphs">x</text><text x="915.80" y="152" font-family="Liberation Mono" font-size="23.1" fill="#4ea272" stroke="#efe3d9" stroke-width="0.3" textLength="13.85" lengthAdjust="spacingAndGlyphs">-</text><text x="929.65" y="152" font-family="Liberation Mono" font-size="23.1" fill="#3d4577" stroke="#efe3d9" stroke-width="0.3" textLength="13.85" lengthAdjust="spacingAndGlyphs">8</text><text x="943.50" y="152" font-family="Liberation Mono" font-size="23.1" fill="#4ea272" stroke="#efe3d9" stroke-width="0.3" textLength="13.85" lengthAdjust="spacingAndGlyphs">)</text><text x="957.35" y="152" font-family="Liberation Mono" font-size="23.1" fill="#4ea272" stroke="#efe3d9" stroke-width="0.3" textLength="13.85" lengthAdjust="spacingAndGlyphs">+</text><text x="971.20" y="152" font-family="Liberation Mono" font-size="23.1" fill="#4ea272" stroke="#efe3d9" stroke-width="0.3" textLength="13.85" lengthAdjust="spacingAndGlyphs">(</text><text x="985.05" y="152" font-family="Liberation Mono" font-size="23.1" fill="#e8923e" stroke="#efe3d9" stroke-width="0.3" textLength="13.85" lengthAdjust="spacingAndGlyphs">y</text><text x="998.90" y="152" font-family="Liberation Mono" font-size="23.1" fill="#4ea272" stroke="#efe3d9" stroke-width="0.3" textLength="13.85" lengthAdjust="spacingAndGlyphs">/</text><text x="1012.75" y="152" font-family="Liberation Mono" font-size="23.1" fill="#3d4577" stroke="#efe3d9" stroke-width="0.3" textLength="13.85" lengthAdjust="spacingAndGlyphs">2</text><text x="1026.60" y="152" font-family="Liberation Mono" font-size="23.1" fill="#4ea272" stroke="#efe3d9" stroke-width="0.3" textLength="13.85" lengthAdjust="spacingAndGlyphs">)</text><text x="1040.45" y="152" font-family="Liberation Mono" font-size="23.1" fill="#4ea272" stroke="#efe3d9" stroke-width="0.3" textLength="13.85" lengthAdjust="spacingAndGlyphs">)</text><text x="785" y="194" font-family="Liberation Mono" font-size="23.1" fill="#a39c92" text-anchor="end" stroke="#fcf0e7" stroke-width="0.6">2</text><text x="805.00" y="194" font-family="Liberation Mono" font-size="23.1" fill="#141414" stroke="#fcf0e7" stroke-width="0.3" textLength="27.70" lengthAdjust="spacingAndGlyphs">ry</text><text x="846.55" y="194" font-family="Liberation Mono" font-size="23.1" fill="#4ea272" stroke="#fcf0e7" stroke-width="0.3" textLength="13.85" lengthAdjust="spacingAndGlyphs">=</text><text x="874.25" y="194" font-family="Liberation Mono" font-size="23.1" fill="#4ea272" stroke="#fcf0e7" stroke-width="0.3" textLength="13.85" lengthAdjust="spacingAndGlyphs">(</text><text x="888.10" y="194" font-family="Liberation Mono" font-size="23.1" fill="#4ea272" stroke="#fcf0e7" stroke-width="0.3" textLength="13.85" lengthAdjust="spacingAndGlyphs">(</text><text x="901.95" y="194" font-family="Liberation Mono" font-size="23.1" fill="#e8923e" stroke="#fcf0e7" stroke-width="0.3" textLength="13.85" lengthAdjust="spacingAndGlyphs">y</text><text x="915.80" y="194" font-family="Liberation Mono" font-size="23.1" fill="#4ea272" stroke="#fcf0e7" stroke-width="0.3" textLength="13.85" lengthAdjust="spacingAndGlyphs">-</text><text x="929.65" y="194" font-family="Liberation Mono" font-size="23.1" fill="#3d4577" stroke="#fcf0e7" stroke-width="0.3" textLength="13.85" lengthAdjust="spacingAndGlyphs">4</text><text x="943.50" y="194" font-family="Liberation Mono" font-size="23.1" fill="#4ea272" stroke="#fcf0e7" stroke-width="0.3" textLength="13.85" lengthAdjust="spacingAndGlyphs">)</text><text x="957.35" y="194" font-family="Liberation Mono" font-size="23.1" fill="#4ea272" stroke="#fcf0e7" stroke-width="0.3" textLength="13.85" lengthAdjust="spacingAndGlyphs">-</text><text x="971.20" y="194" font-family="Liberation Mono" font-size="23.1" fill="#4ea272" stroke="#fcf0e7" stroke-width="0.3" textLength="13.85" lengthAdjust="spacingAndGlyphs">(</text><text x="985.05" y="194" font-family="Liberation Mono" font-size="23.1" fill="#e8923e" stroke="#fcf0e7" stroke-width="0.3" textLength="13.85" lengthAdjust="spacingAndGlyphs">x</text><text x="998.90" y="194" font-family="Liberation Mono" font-size="23.1" fill="#4ea272" stroke="#fcf0e7" stroke-width="0.3" textLength="13.85" lengthAdjust="spacingAndGlyphs">/</text><text x="1012.75" y="194" font-family="Liberation Mono" font-size="23.1" fill="#3d4577" stroke="#fcf0e7" stroke-width="0.3" textLength="13.85" lengthAdjust="spacingAndGlyphs">2</text><text x="1026.60" y="194" font-family="Liberation Mono" font-size="23.1" fill="#4ea272" stroke="#fcf0e7" stroke-width="0.3" textLength="13.85" lengthAdjust="spacingAndGlyphs">)</text><text x="1040.45" y="194" font-family="Liberation Mono" font-size="23.1" fill="#4ea272" stroke="#fcf0e7" stroke-width="0.3" textLength="13.85" lengthAdjust="spacingAndGlyphs">)</text><text x="785" y="236" font-family="Liberation Mono" font-size="23.1" fill="#a39c92" text-anchor="end" stroke="#fcf0e7" stroke-width="0.6">3</text><text x="785" y="278" font-family="Liberation Mono" font-size="23.1" fill="#a39c92" text-anchor="end" stroke="#fcf0e7" stroke-width="0.6">4</text><text x="805.00" y="278" font-family="Liberation Mono" font-size="23.1" fill="#141414" stroke="#fcf0e7" stroke-width="0.3" textLength="27.70" lengthAdjust="spacingAndGlyphs">tx</text><text x="846.55" y="278" font-family="Liberation Mono" font-size="23.1" fill="#4ea272" stroke="#fcf0e7" stroke-width="0.3" textLength="13.85" lengthAdjust="spacingAndGlyphs">=</text><text x="874.25" y="278" font-family="Liberation Mono" font-size="23.1" fill="#141414" stroke="#fcf0e7" stroke-width="0.3" textLength="27.70" lengthAdjust="spacingAndGlyphs">rx</text><text x="915.80" y="278" font-family="Liberation Mono" font-size="23.1" fill="#4ea272" stroke="#fcf0e7" stroke-width="0.3" textLength="13.85" lengthAdjust="spacingAndGlyphs">%</text><text x="943.50" y="278" font-family="Liberation Mono" font-size="23.1" fill="#3d4577" stroke="#fcf0e7" stroke-width="0.3" textLength="27.70" lengthAdjust="spacingAndGlyphs">16</text><text x="785" y="320" font-family="Liberation Mono" font-size="23.1" fill="#a39c92" text-anchor="end" stroke="#fcf0e7" stroke-width="0.6">5</text><text x="805.00" y="320" font-family="Liberation Mono" font-size="23.1" fill="#141414" stroke="#fcf0e7" stroke-width="0.3" textLength="27.70" lengthAdjust="spacingAndGlyphs">ty</text><text x="846.55" y="320" font-family="Liberation Mono" font-size="23.1" fill="#4ea272" stroke="#fcf0e7" stroke-width="0.3" textLength="13.85" lengthAdjust="spacingAndGlyphs">=</text><text x="874.25" y="320" font-family="Liberation Mono" font-size="23.1" fill="#141414" stroke="#fcf0e7" stroke-width="0.3" textLength="27.70" lengthAdjust="spacingAndGlyphs">ry</text><text x="915.80" y="320" font-family="Liberation Mono" font-size="23.1" fill="#4ea272" stroke="#fcf0e7" stroke-width="0.3" textLength="13.85" lengthAdjust="spacingAndGlyphs">%</text><text x="943.50" y="320" font-family="Liberation Mono" font-size="23.1" fill="#3d4577" stroke="#fcf0e7" stroke-width="0.3" textLength="27.70" lengthAdjust="spacingAndGlyphs">16</text><text x="785" y="362" font-family="Liberation Mono" font-size="23.1" fill="#a39c92" text-anchor="end" stroke="#fcf0e7" stroke-width="0.6">6</text><text x="785" y="404" font-family="Liberation Mono" font-size="23.1" fill="#a39c92" text-anchor="end" stroke="#fcf0e7" stroke-width="0.6">7</text><text x="805.00" y="404" font-family="Liberation Mono" font-size="23.1" fill="#141414" stroke="#fcf0e7" stroke-width="0.3" textLength="27.70" lengthAdjust="spacingAndGlyphs">cx</text><text x="846.55" y="404" font-family="Liberation Mono" font-size="23.1" fill="#4ea272" stroke="#fcf0e7" stroke-width="0.3" textLength="13.85" lengthAdjust="spacingAndGlyphs">=</text><text x="874.25" y="404" font-family="Liberation Mono" font-size="23.1" fill="#141414" stroke="#fcf0e7" stroke-width="0.3" textLength="27.70" lengthAdjust="spacingAndGlyphs">tx</text><text x="915.80" y="404" font-family="Liberation Mono" font-size="23.1" fill="#4ea272" stroke="#fcf0e7" stroke-width="0.3" textLength="13.85" lengthAdjust="spacingAndGlyphs">-</text><text x="943.50" y="404" font-family="Liberation Mono" font-size="23.1" fill="#3d4577" stroke="#fcf0e7" stroke-width="0.3" textLength="13.85" lengthAdjust="spacingAndGlyphs">7</text><text x="785" y="446" font-family="Liberation Mono" font-size="23.1" fill="#a39c92" text-anchor="end" stroke="#fcf0e7" stroke-width="0.6">8</text><text x="805.00" y="446" font-family="Liberation Mono" font-size="23.1" fill="#141414" stroke="#fcf0e7" stroke-width="0.3" textLength="27.70" lengthAdjust="spacingAndGlyphs">cy</text><text x="846.55" y="446" font-family="Liberation Mono" font-size="23.1" fill="#4ea272" stroke="#fcf0e7" stroke-width="0.3" textLength="13.85" lengthAdjust="spacingAndGlyphs">=</text><text x="874.25" y="446" font-family="Liberation Mono" font-size="23.1" fill="#141414" stroke="#fcf0e7" stroke-width="0.3" textLength="27.70" lengthAdjust="spacingAndGlyphs">ty</text><text x="915.80" y="446" font-family="Liberation Mono" font-size="23.1" fill="#4ea272" stroke="#fcf0e7" stroke-width="0.3" textLength="13.85" lengthAdjust="spacingAndGlyphs">-</text><text x="943.50" y="446" font-family="Liberation Mono" font-size="23.1" fill="#3d4577" stroke="#fcf0e7" stroke-width="0.3" textLength="13.85" lengthAdjust="spacingAndGlyphs">7</text><text x="785" y="488" font-family="Liberation Mono" font-size="23.1" fill="#a39c92" text-anchor="end" stroke="#fcf0e7" stroke-width="0.6">9</text><text x="785" y="530" font-family="Liberation Mono" font-size="23.1" fill="#a39c92" text-anchor="end" stroke="#fcf0e7" stroke-width="0.6">10</text><text x="805.00" y="530" font-family="Liberation Mono" font-size="23.1" fill="#141414" stroke="#fcf0e7" stroke-width="0.3" textLength="13.85" lengthAdjust="spacingAndGlyphs">m</text><text x="832.70" y="530" font-family="Liberation Mono" font-size="23.1" fill="#4ea272" stroke="#fcf0e7" stroke-width="0.3" textLength="13.85" lengthAdjust="spacingAndGlyphs">=</text><text x="860.40" y="530" font-family="Liberation Mono" font-size="23.1" fill="#4ea272" stroke="#fcf0e7" stroke-width="0.3" textLength="41.55" lengthAdjust="spacingAndGlyphs">max</text><text x="901.95" y="530" font-family="Liberation Mono" font-size="23.1" fill="#4ea272" stroke="#fcf0e7" stroke-width="0.3" textLength="13.85" lengthAdjust="spacingAndGlyphs">(</text><text x="915.80" y="530" font-family="Liberation Mono" font-size="23.1" fill="#4ea272" stroke="#fcf0e7" stroke-width="0.3" textLength="41.55" lengthAdjust="spacingAndGlyphs">abs</text><text x="957.35" y="530" font-family="Liberation Mono" font-size="23.1" fill="#4ea272" stroke="#fcf0e7" stroke-width="0.3" textLength="13.85" lengthAdjust="spacingAndGlyphs">(</text><text x="971.20" y="530" font-family="Liberation Mono" font-size="23.1" fill="#141414" stroke="#fcf0e7" stroke-width="0.3" textLength="27.70" lengthAdjust="spacingAndGlyphs">cx</text><text x="998.90" y="530" font-family="Liberation Mono" font-size="23.1" fill="#4ea272" stroke="#fcf0e7" stroke-width="0.3" textLength="13.85" lengthAdjust="spacingAndGlyphs">)</text><text x="1012.75" y="530" font-family="Liberation Mono" font-size="23.1" fill="#4ea272" stroke="#fcf0e7" stroke-width="0.3" textLength="13.85" lengthAdjust="spacingAndGlyphs">,</text><text x="1040.45" y="530" font-family="Liberation Mono" font-size="23.1" fill="#4ea272" stroke="#fcf0e7" stroke-width="0.3" textLength="41.55" lengthAdjust="spacingAndGlyphs">abs</text><text x="1082.00" y="530" font-family="Liberation Mono" font-size="23.1" fill="#4ea272" stroke="#fcf0e7" stroke-width="0.3" textLength="13.85" lengthAdjust="spacingAndGlyphs">(</text><text x="1095.85" y="530" font-family="Liberation Mono" font-size="23.1" fill="#141414" stroke="#fcf0e7" stroke-width="0.3" textLength="27.70" lengthAdjust="spacingAndGlyphs">cy</text><text x="1123.55" y="530" font-family="Liberation Mono" font-size="23.1" fill="#4ea272" stroke="#fcf0e7" stroke-width="0.3" textLength="13.85" lengthAdjust="spacingAndGlyphs">)</text><text x="1137.40" y="530" font-family="Liberation Mono" font-size="23.1" fill="#4ea272" stroke="#fcf0e7" stroke-width="0.3" textLength="13.85" lengthAdjust="spacingAndGlyphs">)</text><text x="785" y="572" font-family="Liberation Mono" font-size="23.1" fill="#a39c92" text-anchor="end" stroke="#fcf0e7" stroke-width="0.6">11</text><text x="785" y="614" font-family="Liberation Mono" font-size="23.1" fill="#a39c92" text-anchor="end" stroke="#fcf0e7" stroke-width="0.6">12</text><text x="805.00" y="614" font-family="Liberation Mono" font-size="23.1" fill="#141414" stroke="#fcf0e7" stroke-width="0.3" textLength="83.10" lengthAdjust="spacingAndGlyphs">tile_x</text><text x="901.95" y="614" font-family="Liberation Mono" font-size="23.1" fill="#4ea272" stroke="#fcf0e7" stroke-width="0.3" textLength="13.85" lengthAdjust="spacingAndGlyphs">=</text><text x="929.65" y="614" font-family="Liberation Mono" font-size="23.1" fill="#4ea272" stroke="#fcf0e7" stroke-width="0.3" textLength="69.25" lengthAdjust="spacingAndGlyphs">floor</text><text x="998.90" y="614" font-family="Liberation Mono" font-size="23.1" fill="#4ea272" stroke="#fcf0e7" stroke-width="0.3" textLength="13.85" lengthAdjust="spacingAndGlyphs">(</text><text x="1012.75" y="614" font-family="Liberation Mono" font-size="23.1" fill="#141414" stroke="#fcf0e7" stroke-width="0.3" textLength="27.70" lengthAdjust="spacingAndGlyphs">rx</text><text x="1040.45" y="614" font-family="Liberation Mono" font-size="23.1" fill="#4ea272" stroke="#fcf0e7" stroke-width="0.3" textLength="13.85" lengthAdjust="spacingAndGlyphs">/</text><text x="1054.30" y="614" font-family="Liberation Mono" font-size="23.1" fill="#3d4577" stroke="#fcf0e7" stroke-width="0.3" textLength="27.70" lengthAdjust="spacingAndGlyphs">16</text><text x="1082.00" y="614" font-family="Liberation Mono" font-size="23.1" fill="#4ea272" stroke="#fcf0e7" stroke-width="0.3" textLength="13.85" lengthAdjust="spacingAndGlyphs">)</text><text x="785" y="656" font-family="Liberation Mono" font-size="23.1" fill="#a39c92" text-anchor="end" stroke="#fcf0e7" stroke-width="0.6">13</text><text x="805.00" y="656" font-family="Liberation Mono" font-size="23.1" fill="#141414" stroke="#fcf0e7" stroke-width="0.3" textLength="83.10" lengthAdjust="spacingAndGlyphs">tile_y</text><text x="901.95" y="656" font-family="Liberation Mono" font-size="23.1" fill="#4ea272" stroke="#fcf0e7" stroke-width="0.3" textLength="13.85" lengthAdjust="spacingAndGlyphs">=</text><text x="929.65" y="656" font-family="Liberation Mono" font-size="23.1" fill="#4ea272" stroke="#fcf0e7" stroke-width="0.3" textLength="69.25" lengthAdjust="spacingAndGlyphs">floor</text><text x="998.90" y="656" font-family="Liberation Mono" font-size="23.1" fill="#4ea272" stroke="#fcf0e7" stroke-width="0.3" textLength="13.85" lengthAdjust="spacingAndGlyphs">(</text><text x="1012.75" y="656" font-family="Liberation Mono" font-size="23.1" fill="#141414" stroke="#fcf0e7" stroke-width="0.3" textLength="27.70" lengthAdjust="spacingAndGlyphs">ry</text><text x="1040.45" y="656" font-family="Liberation Mono" font-size="23.1" fill="#4ea272" stroke="#fcf0e7" stroke-width="0.3" textLength="13.85" lengthAdjust="spacingAndGlyphs">/</text><text x="1054.30" y="656" font-family="Liberation Mono" font-size="23.1" fill="#3d4577" stroke="#fcf0e7" stroke-width="0.3" textLength="27.70" lengthAdjust="spacingAndGlyphs">16</text><text x="1082.00" y="656" font-family="Liberation Mono" font-size="23.1" fill="#4ea272" stroke="#fcf0e7" stroke-width="0.3" textLength="13.85" lengthAdjust="spacingAndGlyphs">)</text><text x="785" y="698" font-family="Liberation Mono" font-size="23.1" fill="#a39c92" text-anchor="end" stroke="#fcf0e7" stroke-width="0.6">14</text><text x="805.00" y="698" font-family="Liberation Mono" font-size="23.1" fill="#141414" stroke="#fcf0e7" stroke-width="0.3" textLength="41.55" lengthAdjust="spacingAndGlyphs">t_c</text><text x="860.40" y="698" font-family="Liberation Mono" font-size="23.1" fill="#4ea272" stroke="#fcf0e7" stroke-width="0.3" textLength="13.85" lengthAdjust="spacingAndGlyphs">=</text><text x="888.10" y="698" font-family="Liberation Mono" font-size="23.1" fill="#4ea272" stroke="#fcf0e7" stroke-width="0.3" textLength="13.85" lengthAdjust="spacingAndGlyphs">(</text><text x="901.95" y="698" font-family="Liberation Mono" font-size="23.1" fill="#4ea272" stroke="#fcf0e7" stroke-width="0.3" textLength="13.85" lengthAdjust="spacingAndGlyphs">(</text><text x="915.80" y="698" font-family="Liberation Mono" font-size="23.1" fill="#4ea272" stroke="#fcf0e7" stroke-width="0.3" textLength="13.85" lengthAdjust="spacingAndGlyphs">(</text><text x="929.65" y="698" font-family="Liberation Mono" font-size="23.1" fill="#141414" stroke="#fcf0e7" stroke-width="0.3" textLength="83.10" lengthAdjust="spacingAndGlyphs">tile_x</text><text x="1026.60" y="698" font-family="Liberation Mono" font-size="23.1" fill="#4ea272" stroke="#fcf0e7" stroke-width="0.3" textLength="13.85" lengthAdjust="spacingAndGlyphs">*</text><text x="1054.30" y="698" font-family="Liberation Mono" font-size="23.1" fill="#3d4577" stroke="#fcf0e7" stroke-width="0.3" textLength="13.85" lengthAdjust="spacingAndGlyphs">3</text><text x="1082.00" y="698" font-family="Liberation Mono" font-size="23.1" fill="#4ea272" stroke="#fcf0e7" stroke-width="0.3" textLength="13.85" lengthAdjust="spacingAndGlyphs">+</text><text x="1109.70" y="698" font-family="Liberation Mono" font-size="23.1" fill="#141414" stroke="#fcf0e7" stroke-width="0.3" textLength="83.10" lengthAdjust="spacingAndGlyphs">tile_y</text><text x="1206.65" y="698" font-family="Liberation Mono" font-size="23.1" fill="#4ea272" stroke="#fcf0e7" stroke-width="0.3" textLength="13.85" lengthAdjust="spacingAndGlyphs">*</text><text x="1234.35" y="698" font-family="Liberation Mono" font-size="23.1" fill="#3d4577" stroke="#fcf0e7" stroke-width="0.3" textLength="13.85" lengthAdjust="spacingAndGlyphs">2</text><text x="1248.20" y="698" font-family="Liberation Mono" font-size="23.1" fill="#4ea272" stroke="#fcf0e7" stroke-width="0.3" textLength="13.85" lengthAdjust="spacingAndGlyphs">)</text><text x="1262.05" y="698" font-family="Liberation Mono" font-size="23.1" fill="#4ea272" stroke="#fcf0e7" stroke-width="0.3" textLength="13.85" lengthAdjust="spacingAndGlyphs">)</text><text x="1289.75" y="698" font-family="Liberation Mono" font-size="23.1" fill="#4ea272" stroke="#fcf0e7" stroke-width="0.3" textLength="13.85" lengthAdjust="spacingAndGlyphs">%</text><text x="1317.45" y="698" font-family="Liberation Mono" font-size="23.1" fill="#3d4577" stroke="#fcf0e7" stroke-width="0.3" textLength="13.85" lengthAdjust="spacingAndGlyphs">4</text><text x="1331.30" y="698" font-family="Liberation Mono" font-size="23.1" fill="#4ea272" stroke="#fcf0e7" stroke-width="0.3" textLength="13.85" lengthAdjust="spacingAndGlyphs">)</text><text x="785" y="740" font-family="Liberation Mono" font-size="23.1" fill="#a39c92" text-anchor="end" stroke="#fcf0e7" stroke-width="0.6">15</text><text x="805.00" y="740" font-family="Liberation Mono" font-size="23.1" fill="#141414" stroke="#fcf0e7" stroke-width="0.3" textLength="13.85" lengthAdjust="spacingAndGlyphs">p</text><text x="832.70" y="740" font-family="Liberation Mono" font-size="23.1" fill="#4ea272" stroke="#fcf0e7" stroke-width="0.3" textLength="13.85" lengthAdjust="spacingAndGlyphs">=</text><text x="860.40" y="740" font-family="Liberation Mono" font-size="23.1" fill="#4ea272" stroke="#fcf0e7" stroke-width="0.3" textLength="13.85" lengthAdjust="spacingAndGlyphs">{</text><text x="888.10" y="740" font-family="Liberation Mono" font-size="23.1" fill="#3d4577" stroke="#fcf0e7" stroke-width="0.3" textLength="27.70" lengthAdjust="spacingAndGlyphs">12</text><text x="915.80" y="740" font-family="Liberation Mono" font-size="23.1" fill="#4ea272" stroke="#fcf0e7" stroke-width="0.3" textLength="13.85" lengthAdjust="spacingAndGlyphs">,</text><text x="943.50" y="740" font-family="Liberation Mono" font-size="23.1" fill="#3d4577" stroke="#fcf0e7" stroke-width="0.3" textLength="13.85" lengthAdjust="spacingAndGlyphs">6</text><text x="957.35" y="740" font-family="Liberation Mono" font-size="23.1" fill="#4ea272" stroke="#fcf0e7" stroke-width="0.3" textLength="13.85" lengthAdjust="spacingAndGlyphs">,</text><text x="985.05" y="740" font-family="Liberation Mono" font-size="23.1" fill="#3d4577" stroke="#fcf0e7" stroke-width="0.3" textLength="27.70" lengthAdjust="spacingAndGlyphs">13</text><text x="1012.75" y="740" font-family="Liberation Mono" font-size="23.1" fill="#4ea272" stroke="#fcf0e7" stroke-width="0.3" textLength="13.85" lengthAdjust="spacingAndGlyphs">,</text><text x="1040.45" y="740" font-family="Liberation Mono" font-size="23.1" fill="#3d4577" stroke="#fcf0e7" stroke-width="0.3" textLength="13.85" lengthAdjust="spacingAndGlyphs">7</text><text x="1068.15" y="740" font-family="Liberation Mono" font-size="23.1" fill="#4ea272" stroke="#fcf0e7" stroke-width="0.3" textLength="13.85" lengthAdjust="spacingAndGlyphs">}</text><text x="785" y="782" font-family="Liberation Mono" font-size="23.1" fill="#a39c92" text-anchor="end" stroke="#fcf0e7" stroke-width="0.6">16</text><text x="805.00" y="782" font-family="Liberation Mono" font-size="23.1" fill="#141414" stroke="#fcf0e7" stroke-width="0.3" textLength="13.85" lengthAdjust="spacingAndGlyphs">c</text><text x="832.70" y="782" font-family="Liberation Mono" font-size="23.1" fill="#4ea272" stroke="#fcf0e7" stroke-width="0.3" textLength="13.85" lengthAdjust="spacingAndGlyphs">=</text><text x="860.40" y="782" font-family="Liberation Mono" font-size="23.1" fill="#141414" stroke="#fcf0e7" stroke-width="0.3" textLength="13.85" lengthAdjust="spacingAndGlyphs">p</text><text x="874.25" y="782" font-family="Liberation Mono" font-size="23.1" fill="#4ea272" stroke="#fcf0e7" stroke-width="0.3" textLength="13.85" lengthAdjust="spacingAndGlyphs">[</text><text x="888.10" y="782" font-family="Liberation Mono" font-size="23.1" fill="#141414" stroke="#fcf0e7" stroke-width="0.3" textLength="41.55" lengthAdjust="spacingAndGlyphs">t_c</text><text x="929.65" y="782" font-family="Liberation Mono" font-size="23.1" fill="#4ea272" stroke="#fcf0e7" stroke-width="0.3" textLength="13.85" lengthAdjust="spacingAndGlyphs">+</text><text x="943.50" y="782" font-family="Liberation Mono" font-size="23.1" fill="#3d4577" stroke="#fcf0e7" stroke-width="0.3" textLength="13.85" lengthAdjust="spacingAndGlyphs">1</text><text x="957.35" y="782" font-family="Liberation Mono" font-size="23.1" fill="#4ea272" stroke="#fcf0e7" stroke-width="0.3" textLength="13.85" lengthAdjust="spacingAndGlyphs">]</text><text x="785" y="824" font-family="Liberation Mono" font-size="23.1" fill="#a39c92" text-anchor="end" stroke="#fcf0e7" stroke-width="0.6">17</text><text x="785" y="866" font-family="Liberation Mono" font-size="23.1" fill="#a39c92" text-anchor="end" stroke="#fcf0e7" stroke-width="0.6">18</text><text x="785" y="908" font-family="Liberation Mono" font-size="23.1" fill="#a39c92" text-anchor="end" stroke="#fcf0e7" stroke-width="0.6">19</text><text x="805.00" y="908" font-family="Liberation Mono" font-size="23.1" fill="#1f3ca6" stroke="#fcf0e7" stroke-width="0.3" textLength="27.70" lengthAdjust="spacingAndGlyphs">if</text><text x="846.55" y="908" font-family="Liberation Mono" font-size="23.1" fill="#4ea272" stroke="#fcf0e7" stroke-width="0.3" textLength="13.85" lengthAdjust="spacingAndGlyphs">(</text><text x="860.40" y="908" font-family="Liberation Mono" font-size="23.1" fill="#e8923e" stroke="#fcf0e7" stroke-width="0.3" textLength="13.85" lengthAdjust="spacingAndGlyphs">x</text><text x="888.10" y="908" font-family="Liberation Mono" font-size="23.1" fill="#4ea272" stroke="#fcf0e7" stroke-width="0.3" textLength="13.85" lengthAdjust="spacingAndGlyphs">+</text><text x="915.80" y="908" font-family="Liberation Mono" font-size="23.1" fill="#e8923e" stroke="#fcf0e7" stroke-width="0.3" textLength="13.85" lengthAdjust="spacingAndGlyphs">y</text><text x="929.65" y="908" font-family="Liberation Mono" font-size="23.1" fill="#4ea272" stroke="#fcf0e7" stroke-width="0.3" textLength="13.85" lengthAdjust="spacingAndGlyphs">)</text><text x="957.35" y="908" font-family="Liberation Mono" font-size="23.1" fill="#4ea272" stroke="#fcf0e7" stroke-width="0.3" textLength="13.85" lengthAdjust="spacingAndGlyphs">%</text><text x="985.05" y="908" font-family="Liberation Mono" font-size="23.1" fill="#3d4577" stroke="#fcf0e7" stroke-width="0.3" textLength="13.85" lengthAdjust="spacingAndGlyphs">4</text><text x="1012.75" y="908" font-family="Liberation Mono" font-size="23.1" fill="#4ea272" stroke="#fcf0e7" stroke-width="0.3" textLength="27.70" lengthAdjust="spacingAndGlyphs">==</text><text x="1054.30" y="908" font-family="Liberation Mono" font-size="23.1" fill="#3d4577" stroke="#fcf0e7" stroke-width="0.3" textLength="13.85" lengthAdjust="spacingAndGlyphs">1</text><text x="1082.00" y="908" font-family="Liberation Mono" font-size="23.1" fill="#1f3ca6" stroke="#fcf0e7" stroke-width="0.3" textLength="41.55" lengthAdjust="spacingAndGlyphs">and</text><text x="1137.40" y="908" font-family="Liberation Mono" font-size="23.1" fill="#e8923e" stroke="#fcf0e7" stroke-width="0.3" textLength="13.85" lengthAdjust="spacingAndGlyphs">y</text><text x="1165.10" y="908" font-family="Liberation Mono" font-size="23.1" fill="#4ea272" stroke="#fcf0e7" stroke-width="0.3" textLength="13.85" lengthAdjust="spacingAndGlyphs">%</text><text x="1192.80" y="908" font-family="Liberation Mono" font-size="23.1" fill="#3d4577" stroke="#fcf0e7" stroke-width="0.3" textLength="13.85" lengthAdjust="spacingAndGlyphs">2</text><text x="1220.50" y="908" font-family="Liberation Mono" font-size="23.1" fill="#4ea272" stroke="#fcf0e7" stroke-width="0.3" textLength="27.70" lengthAdjust="spacingAndGlyphs">==</text><text x="1262.05" y="908" font-family="Liberation Mono" font-size="23.1" fill="#3d4577" stroke="#fcf0e7" stroke-width="0.3" textLength="13.85" lengthAdjust="spacingAndGlyphs">0</text><text x="1289.75" y="908" font-family="Liberation Mono" font-size="23.1" fill="#1f3ca6" stroke="#fcf0e7" stroke-width="0.3" textLength="55.40" lengthAdjust="spacingAndGlyphs">then</text><text x="785" y="950" font-family="Liberation Mono" font-size="23.1" fill="#a39c92" text-anchor="end" stroke="#fcf0e7" stroke-width="0.6">20</text><text x="832.70" y="950" font-family="Liberation Mono" font-size="23.1" fill="#1f3ca6" stroke="#fcf0e7" stroke-width="0.3" textLength="27.70" lengthAdjust="spacingAndGlyphs">if</text><text x="874.25" y="950" font-family="Liberation Mono" font-size="23.1" fill="#141414" stroke="#fcf0e7" stroke-width="0.3" textLength="13.85" lengthAdjust="spacingAndGlyphs">c</text><text x="901.95" y="950" font-family="Liberation Mono" font-size="23.1" fill="#4ea272" stroke="#fcf0e7" stroke-width="0.3" textLength="27.70" lengthAdjust="spacingAndGlyphs">~=</text><text x="943.50" y="950" font-family="Liberation Mono" font-size="23.1" fill="#3d4577" stroke="#fcf0e7" stroke-width="0.3" textLength="27.70" lengthAdjust="spacingAndGlyphs">12</text><text x="985.05" y="950" font-family="Liberation Mono" font-size="23.1" fill="#1f3ca6" stroke="#fcf0e7" stroke-width="0.3" textLength="55.40" lengthAdjust="spacingAndGlyphs">then</text><text x="1054.30" y="950" font-family="Liberation Mono" font-size="23.1" fill="#141414" stroke="#fcf0e7" stroke-width="0.3" textLength="13.85" lengthAdjust="spacingAndGlyphs">c</text><text x="1082.00" y="950" font-family="Liberation Mono" font-size="23.1" fill="#4ea272" stroke="#fcf0e7" stroke-width="0.3" textLength="13.85" lengthAdjust="spacingAndGlyphs">=</text><text x="1109.70" y="950" font-family="Liberation Mono" font-size="23.1" fill="#3d4577" stroke="#fcf0e7" stroke-width="0.3" textLength="27.70" lengthAdjust="spacingAndGlyphs">12</text><text x="1151.25" y="950" font-family="Liberation Mono" font-size="23.1" fill="#1f3ca6" stroke="#fcf0e7" stroke-width="0.3" textLength="55.40" lengthAdjust="spacingAndGlyphs">else</text><text x="1220.50" y="950" font-family="Liberation Mono" font-size="23.1" fill="#141414" stroke="#fcf0e7" stroke-width="0.3" textLength="13.85" lengthAdjust="spacingAndGlyphs">c</text><text x="1248.20" y="950" font-family="Liberation Mono" font-size="23.1" fill="#4ea272" stroke="#fcf0e7" stroke-width="0.3" textLength="13.85" lengthAdjust="spacingAndGlyphs">=</text><text x="1275.90" y="950" font-family="Liberation Mono" font-size="23.1" fill="#3d4577" stroke="#fcf0e7" stroke-width="0.3" textLength="27.70" lengthAdjust="spacingAndGlyphs">13</text><text x="1317.45" y="950" font-family="Liberation Mono" font-size="23.1" fill="#1f3ca6" stroke="#fcf0e7" stroke-width="0.3" textLength="41.55" lengthAdjust="spacingAndGlyphs">end</text><text x="785" y="992" font-family="Liberation Mono" font-size="23.1" fill="#a39c92" text-anchor="end" stroke="#fcf0e7" stroke-width="0.6">21</text><text x="832.70" y="992" font-family="Liberation Mono" font-size="23.1" fill="#141414" stroke="#fcf0e7" stroke-width="0.3" textLength="13.85" lengthAdjust="spacingAndGlyphs">i</text></g><rect x="1394" y="118" width="18" height="860" fill="#0c0c0c" /><rect x="1396" y="126" width="12" height="852" fill="#c4c6cc" /><rect x="1396" y="120" width="12" height="2" fill="#f4f4f4" /><rect x="1396" y="124" width="12" height="2" fill="#f4f4f4" /><rect x="1396" y="805" width="12" height="2" fill="#0c0c0c" /><rect x="1412" y="118" width="10" height="947" fill="#c4c6cc" /><rect x="1422" y="118" width="2" height="947" fill="#0c0c0c" /><rect x="1412" y="569" width="10" height="45" fill="url(#dots)" /><rect x="758" y="978" width="652" height="39" fill="#c8c9cd" /><rect x="762" y="982" width="388" height="32" fill="#fcd835" /><rect x="763" y="983" width="386" height="30" fill="none" stroke="#111" stroke-width="2" stroke-dasharray="2 2"/><text x="872" y="1005" font-family="Liberation Sans" font-size="18" fill="#111" textLength="165" lengthAdjust="spacingAndGlyphs"  stroke="#111" stroke-width="0.4">RUN CODE (CTRL+R)</text><rect x="1158" y="982" width="248" height="32" fill="#c8c9cd" /><rect x="1159" y="983" width="246" height="30" fill="none" stroke="#111" stroke-width="2" stroke-dasharray="2 2"/><text x="1162" y="1004" font-family="Liberation Sans" font-size="18" fill="#111" textLength="184" lengthAdjust="spacingAndGlyphs"  stroke="#111" stroke-width="0.4">Auto run code as I type</text><rect x="1357" y="987" width="44" height="22" rx="4" fill="#111"/><rect x="1359" y="989" width="22" height="18" fill="#3da262" /><rect x="1379" y="988" width="21" height="20" rx="4" fill="#cfcfd2" stroke="#111" stroke-width="1.5"/><rect x="758.00" y="1017" width="41.5" height="48" fill="#dfe6f2" /><text x="778.40" y="1048" font-family="Liberation Sans" font-size="18" fill="#111" text-anchor="middle"  stroke="#111" stroke-width="0.4">1</text><rect x="798.75" y="1017" width="41.5" height="48" fill="#6b7596" /><text x="819.15" y="1048" font-family="Liberation Sans" font-size="18" fill="#111" text-anchor="middle"  stroke="#111" stroke-width="0.4">2</text><rect x="839.50" y="1017" width="41.5" height="48" fill="#15171b" /><text x="859.90" y="1048" font-family="Liberation Sans" font-size="18" fill="#111" text-anchor="middle"  stroke="#111" stroke-width="0.4">3</text><rect x="880.25" y="1017" width="41.5" height="48" fill="#f4a4a0" /><text x="900.65" y="1048" font-family="Liberation Sans" font-size="18" fill="#111" text-anchor="middle"  stroke="#111" stroke-width="0.4">4</text><rect x="921.00" y="1017" width="41.5" height="48" fill="#d1699c" /><text x="941.40" y="1048" font-family="Liberation Sans" font-size="18" fill="#111" text-anchor="middle"  stroke="#111" stroke-width="0.4">5</text><rect x="961.75" y="1017" width="41.5" height="48" fill="#762a9a" /><text x="982.15" y="1048" font-family="Liberation Sans" font-size="18" fill="#111" text-anchor="middle"  stroke="#111" stroke-width="0.4">6</text><rect x="1002.50" y="1017" width="41.5" height="48" fill="#e83258" /><text x="1022.90" y="1048" font-family="Liberation Sans" font-size="18" fill="#111" text-anchor="middle"  stroke="#111" stroke-width="0.4">7</text><rect x="1043.25" y="1017" width="41.5" height="48" fill="#ef8557" /><text x="1063.65" y="1048" font-family="Liberation Sans" font-size="18" fill="#111" text-anchor="middle"  stroke="#111" stroke-width="0.4">8</text><rect x="1084.00" y="1017" width="41.5" height="48" fill="#fdc672" /><text x="1104.40" y="1048" font-family="Liberation Sans" font-size="18" fill="#111" text-anchor="middle"  stroke="#111" stroke-width="0.4">9</text><rect x="1124.75" y="1017" width="41.5" height="48" fill="#8cc84c" /><text x="1145.15" y="1048" font-family="Liberation Sans" font-size="18" fill="#111" text-anchor="middle"  stroke="#111" stroke-width="0.4">10</text><rect x="1165.50" y="1017" width="41.5" height="48" fill="#3d9e5d" /><text x="1185.90" y="1048" font-family="Liberation Sans" font-size="18" fill="#111" text-anchor="middle"  stroke="#111" stroke-width="0.4">11</text><rect x="1206.25" y="1017" width="41.5" height="48" fill="#373568" /><text x="1226.65" y="1048" font-family="Liberation Sans" font-size="18" fill="#111" text-anchor="middle"  stroke="#111" stroke-width="0.4">12</text><rect x="1247.00" y="1017" width="41.5" height="48" fill="#4a58b2" /><text x="1267.40" y="1048" font-family="Liberation Sans" font-size="18" fill="#111" text-anchor="middle"  stroke="#111" stroke-width="0.4">13</text><rect x="1287.75" y="1017" width="41.5" height="48" fill="#6d9de0" /><text x="1308.15" y="1048" font-family="Liberation Sans" font-size="18" fill="#111" text-anchor="middle"  stroke="#111" stroke-width="0.4">14</text><rect x="1328.50" y="1017" width="41.5" height="48" fill="#a85555" /><text x="1348.90" y="1048" font-family="Liberation Sans" font-size="18" fill="#111" text-anchor="middle"  stroke="#111" stroke-width="0.4">15</text><rect x="1369.25" y="1017" width="41.5" height="48" fill="#522535" /><text x="1389.65" y="1048" font-family="Liberation Sans" font-size="18" fill="#111" text-anchor="middle"  stroke="#111" stroke-width="0.4">16</text><rect x="1410" y="978" width="2" height="87" fill="#0c0c0c" /><text x="1428" y="140" font-family="Liberation Sans" font-size="18" fill="#111" textLength="125" lengthAdjust="spacingAndGlyphs"  stroke="#111" stroke-width="0.4">OUTPUT IMAGE</text><svg x="1428" y="152" width="442" height="787" viewBox="0 0 90 160" preserveAspectRatio="none" shape-rendering="crispEdges"><rect width="90" height="160" fill="#373568"/><path fill="#762a9a" d="M24 0h1v1h-1zM56 0h1v1h-1zM88 0h1v1h-1zM24 1h3v1h-3zM56 1h3v1h-3zM88 1h2v1h-2zM24 2h3v1h-3zM28 2h1v1h-1zM56 2h3v1h-3zM60 2h1v1h-1zM88 2h2v1h-2zM23 3h8v1h-8zM55 3h8v1h-8zM87 3h3v1h-3zM0 4h1v1h-1zM22 4h3v1h-3zM26 4h3v1h-3zM30 4h3v1h-3zM54 4h3v1h-3zM58 4h3v1h-3zM62 4h3v1h-3zM86 4h3v1h-3zM0 5h3v1h-3zM22 5h13v1h-13zM54 5h13v1h-13zM86 5h4v1h-4zM0 6h3v1h-3zM21 6h2v1h-2zM24 6h3v1h-3zM28 6h3v1h-3zM32 6h3v1h-3zM53 6h2v1h-2zM56 6h3v1h-3zM60 6h3v1h-3zM64 6h3v1h-3zM85 6h2v1h-2zM88 6h2v1h-2zM0 7h3v1h-3zM21 7h14v1h-14zM53 7h14v1h-14zM85 7h5v1h-5zM0 8h1v1h-1zM2 8h1v1h-1zM20 8h1v1h-1zM22 8h3v1h-3zM26 8h3v1h-3zM30 8h3v1h-3zM34 8h1v1h-1zM52 8h1v1h-1zM54 8h3v1h-3zM58 8h3v1h-3zM62 8h3v1h-3zM66 8h1v1h-1zM84 8h1v1h-1zM86 8h3v1h-3zM0 9h2v1h-2zM20 9h14v1h-14zM52 9h14v1h-14zM84 9h6v1h-6zM0 10h2v1h-2zM20 10h3v1h-3zM24 10h3v1h-3zM28 10h3v1h-3zM32 10h2v1h-2zM52 10h3v1h-3zM56 10h3v1h-3zM60 10h3v1h-3zM64 10h2v1h-2zM84 10h3v1h-3zM88 10h2v1h-2zM0 11h1v1h-1zM19 11h14v1h-14zM51 11h14v1h-14zM83 11h7v1h-7zM0 12h1v1h-1zM20 12h1v1h-1zM22 12h3v1h-3zM26 12h3v1h-3zM30 12h3v1h-3zM52 12h1v1h-1zM54 12h3v1h-3zM58 12h3v1h-3zM62 12h3v1h-3zM84 12h1v1h-1zM86 12h3v1h-3zM22 13h10v1h-10zM54 13h10v1h-10zM86 13h4v1h-4zM24 14h3v1h-3zM28 14h3v1h-3zM56 14h3v1h-3zM60 14h3v1h-3zM88 14h2v1h-2zM26 15h5v1h-5zM58 15h5v1h-5zM28 16h1v1h-1zM30 16h1v1h-1zM60 16h1v1h-1zM62 16h1v1h-1zM12 26h1v1h-1zM44 26h1v1h-1zM76 26h1v1h-1zM11 27h4v1h-4zM43 27h4v1h-4zM75 27h4v1h-4zM10 28h3v1h-3zM14 28h3v1h-3zM42 28h3v1h-3zM46 28h3v1h-3zM74 28h3v1h-3zM78 28h3v1h-3zM10 29h9v1h-9zM42 29h9v1h-9zM74 29h9v1h-9zM9 30h2v1h-2zM12 30h3v1h-3zM16 30h3v1h-3zM20 30h1v1h-1zM41 30h2v1h-2zM44 30h3v1h-3zM48 30h3v1h-3zM52 30h1v1h-1zM73 30h2v1h-2zM76 30h3v1h-3zM80 30h3v1h-3zM84 30h1v1h-1zM9 31h14v1h-14zM41 31h14v1h-14zM73 31h14v1h-14zM8 32h1v1h-1zM10 32h3v1h-3zM14 32h3v1h-3zM18 32h3v1h-3zM22 32h1v1h-1zM40 32h1v1h-1zM42 32h3v1h-3zM46 32h3v1h-3zM50 32h3v1h-3zM54 32h1v1h-1zM72 32h1v1h-1zM74 32h3v1h-3zM78 32h3v1h-3zM82 32h3v1h-3zM86 32h1v1h-1zM8 33h14v1h-14zM40 33h14v1h-14zM72 33h14v1h-14zM8 34h3v1h-3zM12 34h3v1h-3zM16 34h3v1h-3zM20 34h2v1h-2zM40 34h3v1h-3zM44 34h3v1h-3zM48 34h3v1h-3zM52 34h2v1h-2zM72 34h3v1h-3zM76 34h3v1h-3zM80 34h3v1h-3zM84 34h2v1h-2zM7 35h14v1h-14zM39 35h14v1h-14zM71 35h14v1h-14zM6 36h3v1h-3zM10 36h3v1h-3zM14 36h3v1h-3zM18 36h3v1h-3zM38 36h3v1h-3zM42 36h3v1h-3zM46 36h3v1h-3zM50 36h3v1h-3zM70 36h3v1h-3zM74 36h3v1h-3zM78 36h3v1h-3zM82 36h3v1h-3zM6 37h14v1h-14zM38 37h14v1h-14zM70 37h14v1h-14zM8 38h3v1h-3zM12 38h3v1h-3zM16 38h3v1h-3zM40 38h3v1h-3zM44 38h3v1h-3zM48 38h3v1h-3zM72 38h3v1h-3zM76 38h3v1h-3zM80 38h3v1h-3zM10 39h9v1h-9zM42 39h9v1h-9zM74 39h9v1h-9zM12 40h1v1h-1zM14 40h3v1h-3zM18 40h1v1h-1zM44 40h1v1h-1zM46 40h3v1h-3zM50 40h1v1h-1zM76 40h1v1h-1zM78 40h3v1h-3zM82 40h1v1h-1zM14 41h4v1h-4zM46 41h4v1h-4zM78 41h4v1h-4zM16 42h2v1h-2zM48 42h2v1h-2zM80 42h2v1h-2zM0 52h1v1h-1zM30 52h3v1h-3zM62 52h3v1h-3zM0 53h3v1h-3zM30 53h5v1h-5zM62 53h5v1h-5zM0 54h3v1h-3zM4 54h1v1h-1zM29 54h2v1h-2zM32 54h3v1h-3zM36 54h1v1h-1zM61 54h2v1h-2zM64 54h3v1h-3zM68 54h1v1h-1zM0 55h7v1h-7zM29 55h10v1h-10zM61 55h10v1h-10zM0 56h1v1h-1zM2 56h3v1h-3zM6 56h3v1h-3zM28 56h1v1h-1zM30 56h3v1h-3zM34 56h3v1h-3zM38 56h3v1h-3zM60 56h1v1h-1zM62 56h3v1h-3zM66 56h3v1h-3zM70 56h3v1h-3zM0 57h10v1h-10zM28 57h14v1h-14zM60 57h14v1h-14zM0 58h3v1h-3zM4 58h3v1h-3zM8 58h2v1h-2zM28 58h3v1h-3zM32 58h3v1h-3zM36 58h3v1h-3zM40 58h2v1h-2zM60 58h3v1h-3zM64 58h3v1h-3zM68 58h3v1h-3zM72 58h2v1h-2zM0 59h9v1h-9zM27 59h14v1h-14zM59 59h14v1h-14zM0 60h1v1h-1zM2 60h3v1h-3zM6 60h3v1h-3zM26 60h3v1h-3zM30 60h3v1h-3zM34 60h3v1h-3zM38 60h3v1h-3zM58 60h3v1h-3zM62 60h3v1h-3zM66 60h3v1h-3zM70 60h3v1h-3zM0 61h8v1h-8zM26 61h14v1h-14zM58 61h14v1h-14zM0 62h3v1h-3zM4 62h3v1h-3zM25 62h2v1h-2zM28 62h3v1h-3zM32 62h3v1h-3zM36 62h3v1h-3zM57 62h2v1h-2zM60 62h3v1h-3zM64 62h3v1h-3zM68 62h3v1h-3zM89 62h1v1h-1zM0 63h7v1h-7zM26 63h13v1h-13zM58 63h13v1h-13zM0 64h1v1h-1zM2 64h3v1h-3zM6 64h1v1h-1zM28 64h1v1h-1zM30 64h3v1h-3zM34 64h3v1h-3zM38 64h1v1h-1zM60 64h1v1h-1zM62 64h3v1h-3zM66 64h3v1h-3zM70 64h1v1h-1zM0 65h6v1h-6zM30 65h8v1h-8zM62 65h8v1h-8zM0 66h3v1h-3zM4 66h2v1h-2zM32 66h3v1h-3zM36 66h2v1h-2zM64 66h3v1h-3zM68 66h2v1h-2zM2 67h3v1h-3zM34 67h3v1h-3zM66 67h3v1h-3zM4 68h1v1h-1zM36 68h1v1h-1zM68 68h1v1h-1zM18 77h1v1h-1zM50 77h1v1h-1zM82 77h1v1h-1zM17 78h2v1h-2zM20 78h1v1h-1zM49 78h2v1h-2zM52 78h1v1h-1zM81 78h2v1h-2zM84 78h1v1h-1zM17 79h6v1h-6zM49 79h6v1h-6zM81 79h6v1h-6zM16 80h1v1h-1zM18 80h3v1h-3zM22 80h3v1h-3zM48 80h1v1h-1zM50 80h3v1h-3zM54 80h3v1h-3zM80 80h1v1h-1zM82 80h3v1h-3zM86 80h3v1h-3zM16 81h11v1h-11zM48 81h11v1h-11zM80 81h10v1h-10zM16 82h3v1h-3zM20 82h3v1h-3zM24 82h3v1h-3zM28 82h1v1h-1zM48 82h3v1h-3zM52 82h3v1h-3zM56 82h3v1h-3zM60 82h1v1h-1zM80 82h3v1h-3zM84 82h3v1h-3zM88 82h2v1h-2zM15 83h14v1h-14zM47 83h14v1h-14zM79 83h11v1h-11zM14 84h3v1h-3zM18 84h3v1h-3zM22 84h3v1h-3zM26 84h3v1h-3zM46 84h3v1h-3zM50 84h3v1h-3zM54 84h3v1h-3zM58 84h3v1h-3zM78 84h3v1h-3zM82 84h3v1h-3zM86 84h3v1h-3zM14 85h14v1h-14zM46 85h14v1h-14zM78 85h12v1h-12zM13 86h2v1h-2zM16 86h3v1h-3zM20 86h3v1h-3zM24 86h3v1h-3zM45 86h2v1h-2zM48 86h3v1h-3zM52 86h3v1h-3zM56 86h3v1h-3zM77 86h2v1h-2zM80 86h3v1h-3zM84 86h3v1h-3zM88 86h2v1h-2zM13 87h14v1h-14zM45 87h14v1h-14zM77 87h13v1h-13zM12 88h1v1h-1zM14 88h3v1h-3zM18 88h3v1h-3zM22 88h3v1h-3zM26 88h1v1h-1zM44 88h1v1h-1zM46 88h3v1h-3zM50 88h3v1h-3zM54 88h3v1h-3zM58 88h1v1h-1zM76 88h1v1h-1zM78 88h3v1h-3zM82 88h3v1h-3zM86 88h3v1h-3zM14 89h12v1h-12zM46 89h12v1h-12zM78 89h12v1h-12zM16 90h3v1h-3zM20 90h3v1h-3zM24 90h2v1h-2zM48 90h3v1h-3zM52 90h3v1h-3zM56 90h2v1h-2zM80 90h3v1h-3zM84 90h3v1h-3zM88 90h2v1h-2zM18 91h7v1h-7zM50 91h7v1h-7zM82 91h7v1h-7zM20 92h1v1h-1zM22 92h3v1h-3zM52 92h1v1h-1zM54 92h3v1h-3zM84 92h1v1h-1zM86 92h3v1h-3zM22 93h2v1h-2zM54 93h2v1h-2zM86 93h2v1h-2zM5 103h2v1h-2zM37 103h2v1h-2zM69 103h2v1h-2zM4 104h1v1h-1zM6 104h3v1h-3zM36 104h1v1h-1zM38 104h3v1h-3zM68 104h1v1h-1zM70 104h3v1h-3zM4 105h7v1h-7zM36 105h7v1h-7zM68 105h7v1h-7zM4 106h3v1h-3zM8 106h3v1h-3zM12 106h1v1h-1zM36 106h3v1h-3zM40 106h3v1h-3zM44 106h1v1h-1zM68 106h3v1h-3zM72 106h3v1h-3zM76 106h1v1h-1zM3 107h12v1h-12zM35 107h12v1h-12zM67 107h12v1h-12zM2 108h3v1h-3zM6 108h3v1h-3zM10 108h3v1h-3zM14 108h3v1h-3zM34 108h3v1h-3zM38 108h3v1h-3zM42 108h3v1h-3zM46 108h3v1h-3zM66 108h3v1h-3zM70 108h3v1h-3zM74 108h3v1h-3zM78 108h3v1h-3zM2 109h14v1h-14zM34 109h14v1h-14zM66 109h14v1h-14zM1 110h2v1h-2zM4 110h3v1h-3zM8 110h3v1h-3zM12 110h3v1h-3zM33 110h2v1h-2zM36 110h3v1h-3zM40 110h3v1h-3zM44 110h3v1h-3zM65 110h2v1h-2zM68 110h3v1h-3zM72 110h3v1h-3zM76 110h3v1h-3zM1 111h14v1h-14zM33 111h14v1h-14zM65 111h14v1h-14zM0 112h1v1h-1zM2 112h3v1h-3zM6 112h3v1h-3zM10 112h3v1h-3zM14 112h1v1h-1zM32 112h1v1h-1zM34 112h3v1h-3zM38 112h3v1h-3zM42 112h3v1h-3zM46 112h1v1h-1zM64 112h1v1h-1zM66 112h3v1h-3zM70 112h3v1h-3zM74 112h3v1h-3zM78 112h1v1h-1zM0 113h14v1h-14zM32 113h14v1h-14zM64 113h14v1h-14zM0 114h3v1h-3zM4 114h3v1h-3zM8 114h3v1h-3zM12 114h2v1h-2zM32 114h3v1h-3zM36 114h3v1h-3zM40 114h3v1h-3zM44 114h2v1h-2zM64 114h3v1h-3zM68 114h3v1h-3zM72 114h3v1h-3zM76 114h2v1h-2zM2 115h11v1h-11zM34 115h11v1h-11zM66 115h11v1h-11zM4 116h1v1h-1zM6 116h3v1h-3zM10 116h3v1h-3zM36 116h1v1h-1zM38 116h3v1h-3zM42 116h3v1h-3zM68 116h1v1h-1zM70 116h3v1h-3zM74 116h3v1h-3zM6 117h6v1h-6zM38 117h6v1h-6zM70 117h6v1h-6zM8 118h3v1h-3zM40 118h3v1h-3zM72 118h3v1h-3zM10 119h1v1h-1zM42 119h1v1h-1zM74 119h1v1h-1zM24 128h1v1h-1zM56 128h1v1h-1zM88 128h1v1h-1zM24 129h3v1h-3zM56 129h3v1h-3zM88 129h2v1h-2zM24 130h3v1h-3zM28 130h1v1h-1zM56 130h3v1h-3zM60 130h1v1h-1zM88 130h2v1h-2zM23 131h8v1h-8zM55 131h8v1h-8zM87 131h3v1h-3zM0 132h1v1h-1zM22 132h3v1h-3zM26 132h3v1h-3zM30 132h3v1h-3zM54 132h3v1h-3zM58 132h3v1h-3zM62 132h3v1h-3zM86 132h3v1h-3zM0 133h3v1h-3zM22 133h13v1h-13zM54 133h13v1h-13zM86 133h4v1h-4zM0 134h3v1h-3zM21 134h2v1h-2zM24 134h3v1h-3zM28 134h3v1h-3zM32 134h3v1h-3zM53 134h2v1h-2zM56 134h3v1h-3zM60 134h3v1h-3zM64 134h3v1h-3zM85 134h2v1h-2zM88 134h2v1h-2zM0 135h3v1h-3zM21 135h14v1h-14zM53 135h14v1h-14zM85 135h5v1h-5zM0 136h1v1h-1zM2 136h1v1h-1zM20 136h1v1h-1zM22 136h3v1h-3zM26 136h3v1h-3zM30 136h3v1h-3zM34 136h1v1h-1zM52 136h1v1h-1zM54 136h3v1h-3zM58 136h3v1h-3zM62 136h3v1h-3zM66 136h1v1h-1zM84 136h1v1h-1zM86 136h3v1h-3zM0 137h2v1h-2zM20 137h14v1h-14zM52 137h14v1h-14zM84 137h6v1h-6zM0 138h2v1h-2zM20 138h3v1h-3zM24 138h3v1h-3zM28 138h3v1h-3zM32 138h2v1h-2zM52 138h3v1h-3zM56 138h3v1h-3zM60 138h3v1h-3zM64 138h2v1h-2zM84 138h3v1h-3zM88 138h2v1h-2zM0 139h1v1h-1zM19 139h14v1h-14zM51 139h14v1h-14zM83 139h7v1h-7zM0 140h1v1h-1zM20 140h1v1h-1zM22 140h3v1h-3zM26 140h3v1h-3zM30 140h3v1h-3zM52 140h1v1h-1zM54 140h3v1h-3zM58 140h3v1h-3zM62 140h3v1h-3zM84 140h1v1h-1zM86 140h3v1h-3zM22 141h10v1h-10zM54 141h10v1h-10zM86 141h4v1h-4zM24 142h3v1h-3zM28 142h3v1h-3zM56 142h3v1h-3zM60 142h3v1h-3zM88 142h2v1h-2zM26 143h5v1h-5zM58 143h5v1h-5zM28 144h1v1h-1zM30 144h1v1h-1zM60 144h1v1h-1zM62 144h1v1h-1zM12 154h1v1h-1zM44 154h1v1h-1zM76 154h1v1h-1zM11 155h4v1h-4zM43 155h4v1h-4zM75 155h4v1h-4zM10 156h3v1h-3zM14 156h3v1h-3zM42 156h3v1h-3zM46 156h3v1h-3zM74 156h3v1h-3zM78 156h3v1h-3zM10 157h9v1h-9zM42 157h9v1h-9zM74 157h9v1h-9zM9 158h2v1h-2zM12 158h3v1h-3zM16 158h3v1h-3zM20 158h1v1h-1zM41 158h2v1h-2zM44 158h3v1h-3zM48 158h3v1h-3zM52 158h1v1h-1zM73 158h2v1h-2zM76 158h3v1h-3zM80 158h3v1h-3zM84 158h1v1h-1zM9 159h14v1h-14zM41 159h14v1h-14zM73 159h14v1h-14z"/><path fill="#4a58b2" d="M8 0h1v1h-1zM10 0h3v1h-3zM14 0h3v1h-3zM18 0h3v1h-3zM22 0h1v1h-1zM40 0h1v1h-1zM42 0h3v1h-3zM46 0h3v1h-3zM50 0h3v1h-3zM54 0h1v1h-1zM72 0h1v1h-1zM74 0h3v1h-3zM78 0h3v1h-3zM82 0h3v1h-3zM86 0h1v1h-1zM8 1h14v1h-14zM40 1h14v1h-14zM72 1h14v1h-14zM8 2h3v1h-3zM12 2h3v1h-3zM16 2h3v1h-3zM20 2h2v1h-2zM40 2h3v1h-3zM44 2h3v1h-3zM48 2h3v1h-3zM52 2h2v1h-2zM72 2h3v1h-3zM76 2h3v1h-3zM80 2h3v1h-3zM84 2h2v1h-2zM7 3h14v1h-14zM39 3h14v1h-14zM71 3h14v1h-14zM6 4h3v1h-3zM10 4h3v1h-3zM14 4h3v1h-3zM18 4h3v1h-3zM38 4h3v1h-3zM42 4h3v1h-3zM46 4h3v1h-3zM50 4h3v1h-3zM70 4h3v1h-3zM74 4h3v1h-3zM78 4h3v1h-3zM82 4h3v1h-3zM6 5h14v1h-14zM38 5h14v1h-14zM70 5h14v1h-14zM8 6h3v1h-3zM12 6h3v1h-3zM16 6h3v1h-3zM40 6h3v1h-3zM44 6h3v1h-3zM48 6h3v1h-3zM72 6h3v1h-3zM76 6h3v1h-3zM80 6h3v1h-3zM10 7h9v1h-9zM42 7h9v1h-9zM74 7h9v1h-9zM5 8h1v1h-1zM12 8h1v1h-1zM14 8h3v1h-3zM18 8h1v1h-1zM37 8h1v1h-1zM44 8h1v1h-1zM46 8h3v1h-3zM50 8h1v1h-1zM69 8h1v1h-1zM76 8h1v1h-1zM78 8h3v1h-3zM82 8h1v1h-1zM14 9h4v1h-4zM46 9h4v1h-4zM78 9h4v1h-4zM3 10h1v1h-1zM7 10h1v1h-1zM11 10h1v1h-1zM16 10h2v1h-2zM35 10h1v1h-1zM39 10h1v1h-1zM43 10h1v1h-1zM48 10h2v1h-2zM67 10h1v1h-1zM71 10h1v1h-1zM75 10h1v1h-1zM80 10h2v1h-2zM5 12h1v1h-1zM9 12h1v1h-1zM13 12h1v1h-1zM37 12h1v1h-1zM41 12h1v1h-1zM45 12h1v1h-1zM69 12h1v1h-1zM73 12h1v1h-1zM77 12h1v1h-1zM3 14h1v1h-1zM7 14h1v1h-1zM11 14h1v1h-1zM15 14h1v1h-1zM35 14h1v1h-1zM39 14h1v1h-1zM43 14h1v1h-1zM47 14h1v1h-1zM67 14h1v1h-1zM71 14h1v1h-1zM75 14h1v1h-1zM79 14h1v1h-1zM1 16h1v1h-1zM5 16h1v1h-1zM9 16h1v1h-1zM13 16h1v1h-1zM33 16h1v1h-1zM37 16h1v1h-1zM41 16h1v1h-1zM45 16h1v1h-1zM65 16h1v1h-1zM69 16h1v1h-1zM73 16h1v1h-1zM77 16h1v1h-1zM3 18h1v1h-1zM7 18h1v1h-1zM11 18h1v1h-1zM35 18h1v1h-1zM39 18h1v1h-1zM43 18h1v1h-1zM67 18h1v1h-1zM71 18h1v1h-1zM75 18h1v1h-1zM0 20h1v1h-1zM5 20h1v1h-1zM9 20h1v1h-1zM30 20h3v1h-3zM37 20h1v1h-1zM41 20h1v1h-1zM62 20h3v1h-3zM69 20h1v1h-1zM73 20h1v1h-1zM0 21h3v1h-3zM30 21h5v1h-5zM62 21h5v1h-5zM0 22h3v1h-3zM4 22h1v1h-1zM11 22h1v1h-1zM29 22h2v1h-2zM32 22h3v1h-3zM36 22h1v1h-1zM43 22h1v1h-1zM61 22h2v1h-2zM64 22h3v1h-3zM68 22h1v1h-1zM75 22h1v1h-1zM0 23h7v1h-7zM29 23h10v1h-10zM61 23h10v1h-10zM0 24h1v1h-1zM2 24h3v1h-3zM6 24h3v1h-3zM28 24h1v1h-1zM30 24h3v1h-3zM34 24h3v1h-3zM38 24h3v1h-3zM60 24h1v1h-1zM62 24h3v1h-3zM66 24h3v1h-3zM70 24h3v1h-3zM0 25h10v1h-10zM28 25h14v1h-14zM60 25h14v1h-14zM0 26h3v1h-3zM4 26h3v1h-3zM8 26h2v1h-2zM28 26h3v1h-3zM32 26h3v1h-3zM36 26h3v1h-3zM40 26h2v1h-2zM60 26h3v1h-3zM64 26h3v1h-3zM68 26h3v1h-3zM72 26h2v1h-2zM0 27h9v1h-9zM27 27h14v1h-14zM59 27h14v1h-14zM0 28h1v1h-1zM2 28h3v1h-3zM6 28h3v1h-3zM26 28h3v1h-3zM30 28h3v1h-3zM34 28h3v1h-3zM38 28h3v1h-3zM58 28h3v1h-3zM62 28h3v1h-3zM66 28h3v1h-3zM70 28h3v1h-3zM0 29h8v1h-8zM26 29h14v1h-14zM58 29h14v1h-14zM0 30h3v1h-3zM4 30h3v1h-3zM25 30h2v1h-2zM28 30h3v1h-3zM32 30h3v1h-3zM36 30h3v1h-3zM57 30h2v1h-2zM60 30h3v1h-3zM64 30h3v1h-3zM68 30h3v1h-3zM89 30h1v1h-1zM0 31h7v1h-7zM26 31h13v1h-13zM58 31h13v1h-13zM0 32h1v1h-1zM2 32h3v1h-3zM6 32h1v1h-1zM28 32h1v1h-1zM30 32h3v1h-3zM34 32h3v1h-3zM38 32h1v1h-1zM60 32h1v1h-1zM62 32h3v1h-3zM66 32h3v1h-3zM70 32h1v1h-1zM0 33h6v1h-6zM30 33h8v1h-8zM62 33h8v1h-8zM0 34h3v1h-3zM4 34h2v1h-2zM23 34h1v1h-1zM27 34h1v1h-1zM32 34h3v1h-3zM36 34h2v1h-2zM55 34h1v1h-1zM59 34h1v1h-1zM64 34h3v1h-3zM68 34h2v1h-2zM87 34h1v1h-1zM2 35h3v1h-3zM34 35h3v1h-3zM66 35h3v1h-3zM4 36h1v1h-1zM25 36h1v1h-1zM29 36h1v1h-1zM36 36h1v1h-1zM57 36h1v1h-1zM61 36h1v1h-1zM68 36h1v1h-1zM89 36h1v1h-1zM3 38h1v1h-1zM23 38h1v1h-1zM27 38h1v1h-1zM31 38h1v1h-1zM35 38h1v1h-1zM55 38h1v1h-1zM59 38h1v1h-1zM63 38h1v1h-1zM67 38h1v1h-1zM87 38h1v1h-1zM1 40h1v1h-1zM21 40h1v1h-1zM25 40h1v1h-1zM29 40h1v1h-1zM33 40h1v1h-1zM53 40h1v1h-1zM57 40h1v1h-1zM61 40h1v1h-1zM65 40h1v1h-1zM85 40h1v1h-1zM89 40h1v1h-1zM19 42h1v1h-1zM23 42h1v1h-1zM27 42h1v1h-1zM31 42h1v1h-1zM51 42h1v1h-1zM55 42h1v1h-1zM59 42h1v1h-1zM63 42h1v1h-1zM83 42h1v1h-1zM87 42h1v1h-1zM21 44h1v1h-1zM25 44h1v1h-1zM29 44h1v1h-1zM53 44h1v1h-1zM57 44h1v1h-1zM61 44h1v1h-1zM85 44h1v1h-1zM89 44h1v1h-1zM18 45h1v1h-1zM50 45h1v1h-1zM82 45h1v1h-1zM17 46h2v1h-2zM20 46h1v1h-1zM27 46h1v1h-1zM31 46h1v1h-1zM49 46h2v1h-2zM52 46h1v1h-1zM59 46h1v1h-1zM63 46h1v1h-1zM81 46h2v1h-2zM84 46h1v1h-1zM17 47h6v1h-6zM49 47h6v1h-6zM81 47h6v1h-6zM16 48h1v1h-1zM18 48h3v1h-3zM22 48h3v1h-3zM29 48h1v1h-1zM48 48h1v1h-1zM50 48h3v1h-3zM54 48h3v1h-3zM61 48h1v1h-1zM80 48h1v1h-1zM82 48h3v1h-3zM86 48h3v1h-3zM16 49h11v1h-11zM48 49h11v1h-11zM80 49h10v1h-10zM16 50h3v1h-3zM20 50h3v1h-3zM24 50h3v1h-3zM28 50h1v1h-1zM48 50h3v1h-3zM52 50h3v1h-3zM56 50h3v1h-3zM60 50h1v1h-1zM80 50h3v1h-3zM84 50h3v1h-3zM88 50h2v1h-2zM15 51h14v1h-14zM47 51h14v1h-14zM79 51h11v1h-11zM14 52h3v1h-3zM18 52h3v1h-3zM22 52h3v1h-3zM26 52h3v1h-3zM46 52h3v1h-3zM50 52h3v1h-3zM54 52h3v1h-3zM58 52h3v1h-3zM78 52h3v1h-3zM82 52h3v1h-3zM86 52h3v1h-3zM14 53h14v1h-14zM46 53h14v1h-14zM78 53h12v1h-12zM13 54h2v1h-2zM16 54h3v1h-3zM20 54h3v1h-3zM24 54h3v1h-3zM45 54h2v1h-2zM48 54h3v1h-3zM52 54h3v1h-3zM56 54h3v1h-3zM77 54h2v1h-2zM80 54h3v1h-3zM84 54h3v1h-3zM88 54h2v1h-2zM13 55h14v1h-14zM45 55h14v1h-14zM77 55h13v1h-13zM12 56h1v1h-1zM14 56h3v1h-3zM18 56h3v1h-3zM22 56h3v1h-3zM26 56h1v1h-1zM44 56h1v1h-1zM46 56h3v1h-3zM50 56h3v1h-3zM54 56h3v1h-3zM58 56h1v1h-1zM76 56h1v1h-1zM78 56h3v1h-3zM82 56h3v1h-3zM86 56h3v1h-3zM14 57h12v1h-12zM46 57h12v1h-12zM78 57h12v1h-12zM11 58h1v1h-1zM16 58h3v1h-3zM20 58h3v1h-3zM24 58h2v1h-2zM43 58h1v1h-1zM48 58h3v1h-3zM52 58h3v1h-3zM56 58h2v1h-2zM75 58h1v1h-1zM80 58h3v1h-3zM84 58h3v1h-3zM88 58h2v1h-2zM18 59h7v1h-7zM50 59h7v1h-7zM82 59h7v1h-7zM13 60h1v1h-1zM20 60h1v1h-1zM22 60h3v1h-3zM45 60h1v1h-1zM52 60h1v1h-1zM54 60h3v1h-3zM77 60h1v1h-1zM84 60h1v1h-1zM86 60h3v1h-3zM22 61h2v1h-2zM54 61h2v1h-2zM86 61h2v1h-2zM11 62h1v1h-1zM15 62h1v1h-1zM19 62h1v1h-1zM43 62h1v1h-1zM47 62h1v1h-1zM51 62h1v1h-1zM75 62h1v1h-1zM79 62h1v1h-1zM83 62h1v1h-1zM9 64h1v1h-1zM13 64h1v1h-1zM17 64h1v1h-1zM21 64h1v1h-1zM41 64h1v1h-1zM45 64h1v1h-1zM49 64h1v1h-1zM53 64h1v1h-1zM73 64h1v1h-1zM77 64h1v1h-1zM81 64h1v1h-1zM85 64h1v1h-1zM7 66h1v1h-1zM11 66h1v1h-1zM15 66h1v1h-1zM19 66h1v1h-1zM39 66h1v1h-1zM43 66h1v1h-1zM47 66h1v1h-1zM51 66h1v1h-1zM71 66h1v1h-1zM75 66h1v1h-1zM79 66h1v1h-1zM83 66h1v1h-1zM9 68h1v1h-1zM13 68h1v1h-1zM17 68h1v1h-1zM41 68h1v1h-1zM45 68h1v1h-1zM49 68h1v1h-1zM73 68h1v1h-1zM77 68h1v1h-1zM81 68h1v1h-1zM11 70h1v1h-1zM15 70h1v1h-1zM19 70h1v1h-1zM43 70h1v1h-1zM47 70h1v1h-1zM51 70h1v1h-1zM75 70h1v1h-1zM79 70h1v1h-1zM83 70h1v1h-1zM5 71h2v1h-2zM37 71h2v1h-2zM69 71h2v1h-2zM4 72h1v1h-1zM6 72h3v1h-3zM13 72h1v1h-1zM17 72h1v1h-1zM36 72h1v1h-1zM38 72h3v1h-3zM45 72h1v1h-1zM49 72h1v1h-1zM68 72h1v1h-1zM70 72h3v1h-3zM77 72h1v1h-1zM81 72h1v1h-1zM4 73h7v1h-7zM36 73h7v1h-7zM68 73h7v1h-7zM4 74h3v1h-3zM8 74h3v1h-3zM12 74h1v1h-1zM36 74h3v1h-3zM40 74h3v1h-3zM44 74h1v1h-1zM68 74h3v1h-3zM72 74h3v1h-3zM76 74h1v1h-1zM3 75h12v1h-12zM35 75h12v1h-12zM67 75h12v1h-12zM2 76h3v1h-3zM6 76h3v1h-3zM10 76h3v1h-3zM14 76h3v1h-3zM34 76h3v1h-3zM38 76h3v1h-3zM42 76h3v1h-3zM46 76h3v1h-3zM66 76h3v1h-3zM70 76h3v1h-3zM74 76h3v1h-3zM78 76h3v1h-3zM2 77h14v1h-14zM34 77h14v1h-14zM66 77h14v1h-14zM1 78h2v1h-2zM4 78h3v1h-3zM8 78h3v1h-3zM12 78h3v1h-3zM33 78h2v1h-2zM36 78h3v1h-3zM40 78h3v1h-3zM44 78h3v1h-3zM65 78h2v1h-2zM68 78h3v1h-3zM72 78h3v1h-3zM76 78h3v1h-3zM1 79h14v1h-14zM33 79h14v1h-14zM65 79h14v1h-14zM0 80h1v1h-1zM2 80h3v1h-3zM6 80h3v1h-3zM10 80h3v1h-3zM14 80h1v1h-1zM32 80h1v1h-1zM34 80h3v1h-3zM38 80h3v1h-3zM42 80h3v1h-3zM46 80h1v1h-1zM64 80h1v1h-1zM66 80h3v1h-3zM70 80h3v1h-3zM74 80h3v1h-3zM78 80h1v1h-1zM0 81h14v1h-14zM32 81h14v1h-14zM64 81h14v1h-14zM0 82h3v1h-3zM4 82h3v1h-3zM8 82h3v1h-3zM12 82h2v1h-2zM32 82h3v1h-3zM36 82h3v1h-3zM40 82h3v1h-3zM44 82h2v1h-2zM64 82h3v1h-3zM68 82h3v1h-3zM72 82h3v1h-3zM76 82h2v1h-2zM2 83h11v1h-11zM34 83h11v1h-11zM66 83h11v1h-11zM4 84h1v1h-1zM6 84h3v1h-3zM10 84h3v1h-3zM36 84h1v1h-1zM38 84h3v1h-3zM42 84h3v1h-3zM68 84h1v1h-1zM70 84h3v1h-3zM74 84h3v1h-3zM6 85h6v1h-6zM38 85h6v1h-6zM70 85h6v1h-6zM3 86h1v1h-1zM8 86h3v1h-3zM31 86h1v1h-1zM35 86h1v1h-1zM40 86h3v1h-3zM63 86h1v1h-1zM67 86h1v1h-1zM72 86h3v1h-3zM10 87h1v1h-1zM42 87h1v1h-1zM74 87h1v1h-1zM1 88h1v1h-1zM5 88h1v1h-1zM29 88h1v1h-1zM33 88h1v1h-1zM37 88h1v1h-1zM61 88h1v1h-1zM65 88h1v1h-1zM69 88h1v1h-1zM3 90h1v1h-1zM7 90h1v1h-1zM27 90h1v1h-1zM31 90h1v1h-1zM35 90h1v1h-1zM39 90h1v1h-1zM59 90h1v1h-1zM63 90h1v1h-1zM67 90h1v1h-1zM71 90h1v1h-1zM1 92h1v1h-1zM5 92h1v1h-1zM29 92h1v1h-1zM33 92h1v1h-1zM37 92h1v1h-1zM61 92h1v1h-1zM65 92h1v1h-1zM69 92h1v1h-1zM3 94h1v1h-1zM7 94h1v1h-1zM27 94h1v1h-1zM31 94h1v1h-1zM35 94h1v1h-1zM39 94h1v1h-1zM59 94h1v1h-1zM63 94h1v1h-1zM67 94h1v1h-1zM71 94h1v1h-1zM1 96h1v1h-1zM5 96h1v1h-1zM24 96h1v1h-1zM29 96h1v1h-1zM33 96h1v1h-1zM37 96h1v1h-1zM56 96h1v1h-1zM61 96h1v1h-1zM65 96h1v1h-1zM69 96h1v1h-1zM88 96h1v1h-1zM24 97h3v1h-3zM56 97h3v1h-3zM88 97h2v1h-2zM3 98h1v1h-1zM24 98h3v1h-3zM28 98h1v1h-1zM35 98h1v1h-1zM56 98h3v1h-3zM60 98h1v1h-1zM67 98h1v1h-1zM88 98h2v1h-2zM23 99h8v1h-8zM55 99h8v1h-8zM87 99h3v1h-3zM0 100h1v1h-1zM22 100h3v1h-3zM26 100h3v1h-3zM30 100h3v1h-3zM54 100h3v1h-3zM58 100h3v1h-3zM62 100h3v1h-3zM86 100h3v1h-3zM0 101h3v1h-3zM22 101h13v1h-13zM54 101h13v1h-13zM86 101h4v1h-4zM0 102h3v1h-3zM21 102h2v1h-2zM24 102h3v1h-3zM28 102h3v1h-3zM32 102h3v1h-3zM53 102h2v1h-2zM56 102h3v1h-3zM60 102h3v1h-3zM64 102h3v1h-3zM85 102h2v1h-2zM88 102h2v1h-2zM0 103h3v1h-3zM21 103h14v1h-14zM53 103h14v1h-14zM85 103h5v1h-5zM0 104h1v1h-1zM2 104h1v1h-1zM20 104h1v1h-1zM22 104h3v1h-3zM26 104h3v1h-3zM30 104h3v1h-3zM34 104h1v1h-1zM52 104h1v1h-1zM54 104h3v1h-3zM58 104h3v1h-3zM62 104h3v1h-3zM66 104h1v1h-1zM84 104h1v1h-1zM86 104h3v1h-3zM0 105h2v1h-2zM20 105h14v1h-14zM52 105h14v1h-14zM84 105h6v1h-6zM0 106h2v1h-2zM20 106h3v1h-3zM24 106h3v1h-3zM28 106h3v1h-3zM32 106h2v1h-2zM52 106h3v1h-3zM56 106h3v1h-3zM60 106h3v1h-3zM64 106h2v1h-2zM84 106h3v1h-3zM88 106h2v1h-2zM0 107h1v1h-1zM19 107h14v1h-14zM51 107h14v1h-14zM83 107h7v1h-7zM0 108h1v1h-1zM20 108h1v1h-1zM22 108h3v1h-3zM26 108h3v1h-3zM30 108h3v1h-3zM52 108h1v1h-1zM54 108h3v1h-3zM58 108h3v1h-3zM62 108h3v1h-3zM84 108h1v1h-1zM86 108h3v1h-3zM22 109h10v1h-10zM54 109h10v1h-10zM86 109h4v1h-4zM19 110h1v1h-1zM24 110h3v1h-3zM28 110h3v1h-3zM51 110h1v1h-1zM56 110h3v1h-3zM60 110h3v1h-3zM83 110h1v1h-1zM88 110h2v1h-2zM26 111h5v1h-5zM58 111h5v1h-5zM17 112h1v1h-1zM21 112h1v1h-1zM28 112h1v1h-1zM30 112h1v1h-1zM49 112h1v1h-1zM53 112h1v1h-1zM60 112h1v1h-1zM62 112h1v1h-1zM81 112h1v1h-1zM85 112h1v1h-1zM15 114h1v1h-1zM19 114h1v1h-1zM23 114h1v1h-1zM27 114h1v1h-1zM47 114h1v1h-1zM51 114h1v1h-1zM55 114h1v1h-1zM59 114h1v1h-1zM79 114h1v1h-1zM83 114h1v1h-1zM87 114h1v1h-1zM17 116h1v1h-1zM21 116h1v1h-1zM25 116h1v1h-1zM49 116h1v1h-1zM53 116h1v1h-1zM57 116h1v1h-1zM81 116h1v1h-1zM85 116h1v1h-1zM89 116h1v1h-1zM15 118h1v1h-1zM19 118h1v1h-1zM23 118h1v1h-1zM27 118h1v1h-1zM47 118h1v1h-1zM51 118h1v1h-1zM55 118h1v1h-1zM59 118h1v1h-1zM79 118h1v1h-1zM83 118h1v1h-1zM87 118h1v1h-1zM13 120h1v1h-1zM17 120h1v1h-1zM21 120h1v1h-1zM25 120h1v1h-1zM45 120h1v1h-1zM49 120h1v1h-1zM53 120h1v1h-1zM57 120h1v1h-1zM77 120h1v1h-1zM81 120h1v1h-1zM85 120h1v1h-1zM89 120h1v1h-1zM12 122h1v1h-1zM19 122h1v1h-1zM23 122h1v1h-1zM44 122h1v1h-1zM51 122h1v1h-1zM55 122h1v1h-1zM76 122h1v1h-1zM83 122h1v1h-1zM87 122h1v1h-1zM11 123h4v1h-4zM43 123h4v1h-4zM75 123h4v1h-4zM10 124h3v1h-3zM14 124h3v1h-3zM21 124h1v1h-1zM42 124h3v1h-3zM46 124h3v1h-3zM53 124h1v1h-1zM74 124h3v1h-3zM78 124h3v1h-3zM85 124h1v1h-1zM10 125h9v1h-9zM42 125h9v1h-9zM74 125h9v1h-9zM9 126h2v1h-2zM12 126h3v1h-3zM16 126h3v1h-3zM20 126h1v1h-1zM41 126h2v1h-2zM44 126h3v1h-3zM48 126h3v1h-3zM52 126h1v1h-1zM73 126h2v1h-2zM76 126h3v1h-3zM80 126h3v1h-3zM84 126h1v1h-1zM9 127h14v1h-14zM41 127h14v1h-14zM73 127h14v1h-14zM8 128h1v1h-1zM10 128h3v1h-3zM14 128h3v1h-3zM18 128h3v1h-3zM22 128h1v1h-1zM40 128h1v1h-1zM42 128h3v1h-3zM46 128h3v1h-3zM50 128h3v1h-3zM54 128h1v1h-1zM72 128h1v1h-1zM74 128h3v1h-3zM78 128h3v1h-3zM82 128h3v1h-3zM86 128h1v1h-1zM8 129h14v1h-14zM40 129h14v1h-14zM72 129h14v1h-14zM8 130h3v1h-3zM12 130h3v1h-3zM16 130h3v1h-3zM20 130h2v1h-2zM40 130h3v1h-3zM44 130h3v1h-3zM48 130h3v1h-3zM52 130h2v1h-2zM72 130h3v1h-3zM76 130h3v1h-3zM80 130h3v1h-3zM84 130h2v1h-2zM7 131h14v1h-14zM39 131h14v1h-14zM71 131h14v1h-14zM6 132h3v1h-3zM10 132h3v1h-3zM14 132h3v1h-3zM18 132h3v1h-3zM38 132h3v1h-3zM42 132h3v1h-3zM46 132h3v1h-3zM50 132h3v1h-3zM70 132h3v1h-3zM74 132h3v1h-3zM78 132h3v1h-3zM82 132h3v1h-3zM6 133h14v1h-14zM38 133h14v1h-14zM70 133h14v1h-14zM8 134h3v1h-3zM12 134h3v1h-3zM16 134h3v1h-3zM40 134h3v1h-3zM44 134h3v1h-3zM48 134h3v1h-3zM72 134h3v1h-3zM76 134h3v1h-3zM80 134h3v1h-3zM10 135h9v1h-9zM42 135h9v1h-9zM74 135h9v1h-9zM5 136h1v1h-1zM12 136h1v1h-1zM14 136h3v1h-3zM18 136h1v1h-1zM37 136h1v1h-1zM44 136h1v1h-1zM46 136h3v1h-3zM50 136h1v1h-1zM69 136h1v1h-1zM76 136h1v1h-1zM78 136h3v1h-3zM82 136h1v1h-1zM14 137h4v1h-4zM46 137h4v1h-4zM78 137h4v1h-4zM3 138h1v1h-1zM7 138h1v1h-1zM11 138h1v1h-1zM16 138h2v1h-2zM35 138h1v1h-1zM39 138h1v1h-1zM43 138h1v1h-1zM48 138h2v1h-2zM67 138h1v1h-1zM71 138h1v1h-1zM75 138h1v1h-1zM80 138h2v1h-2zM5 140h1v1h-1zM9 140h1v1h-1zM13 140h1v1h-1zM37 140h1v1h-1zM41 140h1v1h-1zM45 140h1v1h-1zM69 140h1v1h-1zM73 140h1v1h-1zM77 140h1v1h-1zM3 142h1v1h-1zM7 142h1v1h-1zM11 142h1v1h-1zM15 142h1v1h-1zM35 142h1v1h-1zM39 142h1v1h-1zM43 142h1v1h-1zM47 142h1v1h-1zM67 142h1v1h-1zM71 142h1v1h-1zM75 142h1v1h-1zM79 142h1v1h-1zM1 144h1v1h-1zM5 144h1v1h-1zM9 144h1v1h-1zM13 144h1v1h-1zM33 144h1v1h-1zM37 144h1v1h-1zM41 144h1v1h-1zM45 144h1v1h-1zM65 144h1v1h-1zM69 144h1v1h-1zM73 144h1v1h-1zM77 144h1v1h-1zM3 146h1v1h-1zM7 146h1v1h-1zM11 146h1v1h-1zM35 146h1v1h-1zM39 146h1v1h-1zM43 146h1v1h-1zM67 146h1v1h-1zM71 146h1v1h-1zM75 146h1v1h-1zM0 148h1v1h-1zM5 148h1v1h-1zM9 148h1v1h-1zM30 148h3v1h-3zM37 148h1v1h-1zM41 148h1v1h-1zM62 148h3v1h-3zM69 148h1v1h-1zM73 148h1v1h-1zM0 149h3v1h-3zM30 149h5v1h-5zM62 149h5v1h-5zM0 150h3v1h-3zM4 150h1v1h-1zM11 150h1v1h-1zM29 150h2v1h-2zM32 150h3v1h-3zM36 150h1v1h-1zM43 150h1v1h-1zM61 150h2v1h-2zM64 150h3v1h-3zM68 150h1v1h-1zM75 150h1v1h-1zM0 151h7v1h-7zM29 151h10v1h-10zM61 151h10v1h-10zM0 152h1v1h-1zM2 152h3v1h-3zM6 152h3v1h-3zM28 152h1v1h-1zM30 152h3v1h-3zM34 152h3v1h-3zM38 152h3v1h-3zM60 152h1v1h-1zM62 152h3v1h-3zM66 152h3v1h-3zM70 152h3v1h-3zM0 153h10v1h-10zM28 153h14v1h-14zM60 153h14v1h-14zM0 154h3v1h-3zM4 154h3v1h-3zM8 154h2v1h-2zM28 154h3v1h-3zM32 154h3v1h-3zM36 154h3v1h-3zM40 154h2v1h-2zM60 154h3v1h-3zM64 154h3v1h-3zM68 154h3v1h-3zM72 154h2v1h-2zM0 155h9v1h-9zM27 155h14v1h-14zM59 155h14v1h-14zM0 156h1v1h-1zM2 156h3v1h-3zM6 156h3v1h-3zM26 156h3v1h-3zM30 156h3v1h-3zM34 156h3v1h-3zM38 156h3v1h-3zM58 156h3v1h-3zM62 156h3v1h-3zM66 156h3v1h-3zM70 156h3v1h-3zM0 157h8v1h-8zM26 157h14v1h-14zM58 157h14v1h-14zM0 158h3v1h-3zM4 158h3v1h-3zM25 158h2v1h-2zM28 158h3v1h-3zM32 158h3v1h-3zM36 158h3v1h-3zM57 158h2v1h-2zM60 158h3v1h-3zM64 158h3v1h-3zM68 158h3v1h-3zM89 158h1v1h-1zM0 159h7v1h-7zM26 159h13v1h-13zM58 159h13v1h-13z"/><path fill="#e83258" d="M0 0h1v1h-1zM2 0h3v1h-3zM6 0h1v1h-1zM28 0h1v1h-1zM30 0h3v1h-3zM34 0h3v1h-3zM38 0h1v1h-1zM60 0h1v1h-1zM62 0h3v1h-3zM66 0h3v1h-3zM70 0h1v1h-1zM0 1h6v1h-6zM30 1h8v1h-8zM62 1h8v1h-8zM0 2h3v1h-3zM4 2h2v1h-2zM32 2h3v1h-3zM36 2h2v1h-2zM64 2h3v1h-3zM68 2h2v1h-2zM2 3h3v1h-3zM34 3h3v1h-3zM66 3h3v1h-3zM4 4h1v1h-1zM36 4h1v1h-1zM68 4h1v1h-1zM18 13h1v1h-1zM50 13h1v1h-1zM82 13h1v1h-1zM17 14h2v1h-2zM20 14h1v1h-1zM49 14h2v1h-2zM52 14h1v1h-1zM81 14h2v1h-2zM84 14h1v1h-1zM17 15h6v1h-6zM49 15h6v1h-6zM81 15h6v1h-6zM16 16h1v1h-1zM18 16h3v1h-3zM22 16h3v1h-3zM48 16h1v1h-1zM50 16h3v1h-3zM54 16h3v1h-3zM80 16h1v1h-1zM82 16h3v1h-3zM86 16h3v1h-3zM16 17h11v1h-11zM48 17h11v1h-11zM80 17h10v1h-10zM16 18h3v1h-3zM20 18h3v1h-3zM24 18h3v1h-3zM28 18h1v1h-1zM48 18h3v1h-3zM52 18h3v1h-3zM56 18h3v1h-3zM60 18h1v1h-1zM80 18h3v1h-3zM84 18h3v1h-3zM88 18h2v1h-2zM15 19h14v1h-14zM47 19h14v1h-14zM79 19h11v1h-11zM14 20h3v1h-3zM18 20h3v1h-3zM22 20h3v1h-3zM26 20h3v1h-3zM46 20h3v1h-3zM50 20h3v1h-3zM54 20h3v1h-3zM58 20h3v1h-3zM78 20h3v1h-3zM82 20h3v1h-3zM86 20h3v1h-3zM14 21h14v1h-14zM46 21h14v1h-14zM78 21h12v1h-12zM13 22h2v1h-2zM16 22h3v1h-3zM20 22h3v1h-3zM24 22h3v1h-3zM45 22h2v1h-2zM48 22h3v1h-3zM52 22h3v1h-3zM56 22h3v1h-3zM77 22h2v1h-2zM80 22h3v1h-3zM84 22h3v1h-3zM88 22h2v1h-2zM13 23h14v1h-14zM45 23h14v1h-14zM77 23h13v1h-13zM12 24h1v1h-1zM14 24h3v1h-3zM18 24h3v1h-3zM22 24h3v1h-3zM26 24h1v1h-1zM44 24h1v1h-1zM46 24h3v1h-3zM50 24h3v1h-3zM54 24h3v1h-3zM58 24h1v1h-1zM76 24h1v1h-1zM78 24h3v1h-3zM82 24h3v1h-3zM86 24h3v1h-3zM14 25h12v1h-12zM46 25h12v1h-12zM78 25h12v1h-12zM16 26h3v1h-3zM20 26h3v1h-3zM24 26h2v1h-2zM48 26h3v1h-3zM52 26h3v1h-3zM56 26h2v1h-2zM80 26h3v1h-3zM84 26h3v1h-3zM88 26h2v1h-2zM18 27h7v1h-7zM50 27h7v1h-7zM82 27h7v1h-7zM20 28h1v1h-1zM22 28h3v1h-3zM52 28h1v1h-1zM54 28h3v1h-3zM84 28h1v1h-1zM86 28h3v1h-3zM22 29h2v1h-2zM54 29h2v1h-2zM86 29h2v1h-2zM5 39h2v1h-2zM37 39h2v1h-2zM69 39h2v1h-2zM4 40h1v1h-1zM6 40h3v1h-3zM36 40h1v1h-1zM38 40h3v1h-3zM68 40h1v1h-1zM70 40h3v1h-3zM4 41h7v1h-7zM36 41h7v1h-7zM68 41h7v1h-7zM4 42h3v1h-3zM8 42h3v1h-3zM12 42h1v1h-1zM36 42h3v1h-3zM40 42h3v1h-3zM44 42h1v1h-1zM68 42h3v1h-3zM72 42h3v1h-3zM76 42h1v1h-1zM3 43h12v1h-12zM35 43h12v1h-12zM67 43h12v1h-12zM2 44h3v1h-3zM6 44h3v1h-3zM10 44h3v1h-3zM14 44h3v1h-3zM34 44h3v1h-3zM38 44h3v1h-3zM42 44h3v1h-3zM46 44h3v1h-3zM66 44h3v1h-3zM70 44h3v1h-3zM74 44h3v1h-3zM78 44h3v1h-3zM2 45h14v1h-14zM34 45h14v1h-14zM66 45h14v1h-14zM1 46h2v1h-2zM4 46h3v1h-3zM8 46h3v1h-3zM12 46h3v1h-3zM33 46h2v1h-2zM36 46h3v1h-3zM40 46h3v1h-3zM44 46h3v1h-3zM65 46h2v1h-2zM68 46h3v1h-3zM72 46h3v1h-3zM76 46h3v1h-3zM1 47h14v1h-14zM33 47h14v1h-14zM65 47h14v1h-14zM0 48h1v1h-1zM2 48h3v1h-3zM6 48h3v1h-3zM10 48h3v1h-3zM14 48h1v1h-1zM32 48h1v1h-1zM34 48h3v1h-3zM38 48h3v1h-3zM42 48h3v1h-3zM46 48h1v1h-1zM64 48h1v1h-1zM66 48h3v1h-3zM70 48h3v1h-3zM74 48h3v1h-3zM78 48h1v1h-1zM0 49h14v1h-14zM32 49h14v1h-14zM64 49h14v1h-14zM0 50h3v1h-3zM4 50h3v1h-3zM8 50h3v1h-3zM12 50h2v1h-2zM32 50h3v1h-3zM36 50h3v1h-3zM40 50h3v1h-3zM44 50h2v1h-2zM64 50h3v1h-3zM68 50h3v1h-3zM72 50h3v1h-3zM76 50h2v1h-2zM2 51h11v1h-11zM34 51h11v1h-11zM66 51h11v1h-11zM4 52h1v1h-1zM6 52h3v1h-3zM10 52h3v1h-3zM36 52h1v1h-1zM38 52h3v1h-3zM42 52h3v1h-3zM68 52h1v1h-1zM70 52h3v1h-3zM74 52h3v1h-3zM6 53h6v1h-6zM38 53h6v1h-6zM70 53h6v1h-6zM8 54h3v1h-3zM40 54h3v1h-3zM72 54h3v1h-3zM10 55h1v1h-1zM42 55h1v1h-1zM74 55h1v1h-1zM24 64h1v1h-1zM56 64h1v1h-1zM88 64h1v1h-1zM24 65h3v1h-3zM56 65h3v1h-3zM88 65h2v1h-2zM24 66h3v1h-3zM28 66h1v1h-1zM56 66h3v1h-3zM60 66h1v1h-1zM88 66h2v1h-2zM23 67h8v1h-8zM55 67h8v1h-8zM87 67h3v1h-3zM0 68h1v1h-1zM22 68h3v1h-3zM26 68h3v1h-3zM30 68h3v1h-3zM54 68h3v1h-3zM58 68h3v1h-3zM62 68h3v1h-3zM86 68h3v1h-3zM0 69h3v1h-3zM22 69h13v1h-13zM54 69h13v1h-13zM86 69h4v1h-4zM0 70h3v1h-3zM21 70h2v1h-2zM24 70h3v1h-3zM28 70h3v1h-3zM32 70h3v1h-3zM53 70h2v1h-2zM56 70h3v1h-3zM60 70h3v1h-3zM64 70h3v1h-3zM85 70h2v1h-2zM88 70h2v1h-2zM0 71h3v1h-3zM21 71h14v1h-14zM53 71h14v1h-14zM85 71h5v1h-5zM0 72h1v1h-1zM2 72h1v1h-1zM20 72h1v1h-1zM22 72h3v1h-3zM26 72h3v1h-3zM30 72h3v1h-3zM34 72h1v1h-1zM52 72h1v1h-1zM54 72h3v1h-3zM58 72h3v1h-3zM62 72h3v1h-3zM66 72h1v1h-1zM84 72h1v1h-1zM86 72h3v1h-3zM0 73h2v1h-2zM20 73h14v1h-14zM52 73h14v1h-14zM84 73h6v1h-6zM0 74h2v1h-2zM20 74h3v1h-3zM24 74h3v1h-3zM28 74h3v1h-3zM32 74h2v1h-2zM52 74h3v1h-3zM56 74h3v1h-3zM60 74h3v1h-3zM64 74h2v1h-2zM84 74h3v1h-3zM88 74h2v1h-2zM0 75h1v1h-1zM19 75h14v1h-14zM51 75h14v1h-14zM83 75h7v1h-7zM0 76h1v1h-1zM20 76h1v1h-1zM22 76h3v1h-3zM26 76h3v1h-3zM30 76h3v1h-3zM52 76h1v1h-1zM54 76h3v1h-3zM58 76h3v1h-3zM62 76h3v1h-3zM84 76h1v1h-1zM86 76h3v1h-3zM22 77h10v1h-10zM54 77h10v1h-10zM86 77h4v1h-4zM24 78h3v1h-3zM28 78h3v1h-3zM56 78h3v1h-3zM60 78h3v1h-3zM88 78h2v1h-2zM26 79h5v1h-5zM58 79h5v1h-5zM28 80h1v1h-1zM30 80h1v1h-1zM60 80h1v1h-1zM62 80h1v1h-1zM12 90h1v1h-1zM44 90h1v1h-1zM76 90h1v1h-1zM11 91h4v1h-4zM43 91h4v1h-4zM75 91h4v1h-4zM10 92h3v1h-3zM14 92h3v1h-3zM42 92h3v1h-3zM46 92h3v1h-3zM74 92h3v1h-3zM78 92h3v1h-3zM10 93h9v1h-9zM42 93h9v1h-9zM74 93h9v1h-9zM9 94h2v1h-2zM12 94h3v1h-3zM16 94h3v1h-3zM20 94h1v1h-1zM41 94h2v1h-2zM44 94h3v1h-3zM48 94h3v1h-3zM52 94h1v1h-1zM73 94h2v1h-2zM76 94h3v1h-3zM80 94h3v1h-3zM84 94h1v1h-1zM9 95h14v1h-14zM41 95h14v1h-14zM73 95h14v1h-14zM8 96h1v1h-1zM10 96h3v1h-3zM14 96h3v1h-3zM18 96h3v1h-3zM22 96h1v1h-1zM40 96h1v1h-1zM42 96h3v1h-3zM46 96h3v1h-3zM50 96h3v1h-3zM54 96h1v1h-1zM72 96h1v1h-1zM74 96h3v1h-3zM78 96h3v1h-3zM82 96h3v1h-3zM86 96h1v1h-1zM8 97h14v1h-14zM40 97h14v1h-14zM72 97h14v1h-14zM8 98h3v1h-3zM12 98h3v1h-3zM16 98h3v1h-3zM20 98h2v1h-2zM40 98h3v1h-3zM44 98h3v1h-3zM48 98h3v1h-3zM52 98h2v1h-2zM72 98h3v1h-3zM76 98h3v1h-3zM80 98h3v1h-3zM84 98h2v1h-2zM7 99h14v1h-14zM39 99h14v1h-14zM71 99h14v1h-14zM6 100h3v1h-3zM10 100h3v1h-3zM14 100h3v1h-3zM18 100h3v1h-3zM38 100h3v1h-3zM42 100h3v1h-3zM46 100h3v1h-3zM50 100h3v1h-3zM70 100h3v1h-3zM74 100h3v1h-3zM78 100h3v1h-3zM82 100h3v1h-3zM6 101h14v1h-14zM38 101h14v1h-14zM70 101h14v1h-14zM8 102h3v1h-3zM12 102h3v1h-3zM16 102h3v1h-3zM40 102h3v1h-3zM44 102h3v1h-3zM48 102h3v1h-3zM72 102h3v1h-3zM76 102h3v1h-3zM80 102h3v1h-3zM10 103h9v1h-9zM42 103h9v1h-9zM74 103h9v1h-9zM12 104h1v1h-1zM14 104h3v1h-3zM18 104h1v1h-1zM44 104h1v1h-1zM46 104h3v1h-3zM50 104h1v1h-1zM76 104h1v1h-1zM78 104h3v1h-3zM82 104h1v1h-1zM14 105h4v1h-4zM46 105h4v1h-4zM78 105h4v1h-4zM16 106h2v1h-2zM48 106h2v1h-2zM80 106h2v1h-2zM0 116h1v1h-1zM30 116h3v1h-3zM62 116h3v1h-3zM0 117h3v1h-3zM30 117h5v1h-5zM62 117h5v1h-5zM0 118h3v1h-3zM4 118h1v1h-1zM29 118h2v1h-2zM32 118h3v1h-3zM36 118h1v1h-1zM61 118h2v1h-2zM64 118h3v1h-3zM68 118h1v1h-1zM0 119h7v1h-7zM29 119h10v1h-10zM61 119h10v1h-10zM0 120h1v1h-1zM2 120h3v1h-3zM6 120h3v1h-3zM28 120h1v1h-1zM30 120h3v1h-3zM34 120h3v1h-3zM38 120h3v1h-3zM60 120h1v1h-1zM62 120h3v1h-3zM66 120h3v1h-3zM70 120h3v1h-3zM0 121h10v1h-10zM28 121h14v1h-14zM60 121h14v1h-14zM0 122h3v1h-3zM4 122h3v1h-3zM8 122h2v1h-2zM28 122h3v1h-3zM32 122h3v1h-3zM36 122h3v1h-3zM40 122h2v1h-2zM60 122h3v1h-3zM64 122h3v1h-3zM68 122h3v1h-3zM72 122h2v1h-2zM0 123h9v1h-9zM27 123h14v1h-14zM59 123h14v1h-14zM0 124h1v1h-1zM2 124h3v1h-3zM6 124h3v1h-3zM26 124h3v1h-3zM30 124h3v1h-3zM34 124h3v1h-3zM38 124h3v1h-3zM58 124h3v1h-3zM62 124h3v1h-3zM66 124h3v1h-3zM70 124h3v1h-3zM0 125h8v1h-8zM26 125h14v1h-14zM58 125h14v1h-14zM0 126h3v1h-3zM4 126h3v1h-3zM25 126h2v1h-2zM28 126h3v1h-3zM32 126h3v1h-3zM36 126h3v1h-3zM57 126h2v1h-2zM60 126h3v1h-3zM64 126h3v1h-3zM68 126h3v1h-3zM89 126h1v1h-1zM0 127h7v1h-7zM26 127h13v1h-13zM58 127h13v1h-13zM0 128h1v1h-1zM2 128h3v1h-3zM6 128h1v1h-1zM28 128h1v1h-1zM30 128h3v1h-3zM34 128h3v1h-3zM38 128h1v1h-1zM60 128h1v1h-1zM62 128h3v1h-3zM66 128h3v1h-3zM70 128h1v1h-1zM0 129h6v1h-6zM30 129h8v1h-8zM62 129h8v1h-8zM0 130h3v1h-3zM4 130h2v1h-2zM32 130h3v1h-3zM36 130h2v1h-2zM64 130h3v1h-3zM68 130h2v1h-2zM2 131h3v1h-3zM34 131h3v1h-3zM66 131h3v1h-3zM4 132h1v1h-1zM36 132h1v1h-1zM68 132h1v1h-1zM18 141h1v1h-1zM50 141h1v1h-1zM82 141h1v1h-1zM17 142h2v1h-2zM20 142h1v1h-1zM49 142h2v1h-2zM52 142h1v1h-1zM81 142h2v1h-2zM84 142h1v1h-1zM17 143h6v1h-6zM49 143h6v1h-6zM81 143h6v1h-6zM16 144h1v1h-1zM18 144h3v1h-3zM22 144h3v1h-3zM48 144h1v1h-1zM50 144h3v1h-3zM54 144h3v1h-3zM80 144h1v1h-1zM82 144h3v1h-3zM86 144h3v1h-3zM16 145h11v1h-11zM48 145h11v1h-11zM80 145h10v1h-10zM16 146h3v1h-3zM20 146h3v1h-3zM24 146h3v1h-3zM28 146h1v1h-1zM48 146h3v1h-3zM52 146h3v1h-3zM56 146h3v1h-3zM60 146h1v1h-1zM80 146h3v1h-3zM84 146h3v1h-3zM88 146h2v1h-2zM15 147h14v1h-14zM47 147h14v1h-14zM79 147h11v1h-11zM14 148h3v1h-3zM18 148h3v1h-3zM22 148h3v1h-3zM26 148h3v1h-3zM46 148h3v1h-3zM50 148h3v1h-3zM54 148h3v1h-3zM58 148h3v1h-3zM78 148h3v1h-3zM82 148h3v1h-3zM86 148h3v1h-3zM14 149h14v1h-14zM46 149h14v1h-14zM78 149h12v1h-12zM13 150h2v1h-2zM16 150h3v1h-3zM20 150h3v1h-3zM24 150h3v1h-3zM45 150h2v1h-2zM48 150h3v1h-3zM52 150h3v1h-3zM56 150h3v1h-3zM77 150h2v1h-2zM80 150h3v1h-3zM84 150h3v1h-3zM88 150h2v1h-2zM13 151h14v1h-14zM45 151h14v1h-14zM77 151h13v1h-13zM12 152h1v1h-1zM14 152h3v1h-3zM18 152h3v1h-3zM22 152h3v1h-3zM26 152h1v1h-1zM44 152h1v1h-1zM46 152h3v1h-3zM50 152h3v1h-3zM54 152h3v1h-3zM58 152h1v1h-1zM76 152h1v1h-1zM78 152h3v1h-3zM82 152h3v1h-3zM86 152h3v1h-3zM14 153h12v1h-12zM46 153h12v1h-12zM78 153h12v1h-12zM16 154h3v1h-3zM20 154h3v1h-3zM24 154h2v1h-2zM48 154h3v1h-3zM52 154h3v1h-3zM56 154h2v1h-2zM80 154h3v1h-3zM84 154h3v1h-3zM88 154h2v1h-2zM18 155h7v1h-7zM50 155h7v1h-7zM82 155h7v1h-7zM20 156h1v1h-1zM22 156h3v1h-3zM52 156h1v1h-1zM54 156h3v1h-3zM84 156h1v1h-1zM86 156h3v1h-3zM22 157h2v1h-2zM54 157h2v1h-2zM86 157h2v1h-2z"/></svg><text x="1428" y="970" font-family="Liberation Sans" font-size="18" fill="#111" textLength="94" lengthAdjust="spacingAndGlyphs"  stroke="#111" stroke-width="0.4">Canvas Size</text><rect x="1533" y="949" width="293" height="29" fill="#c8c9cd" /><rect x="1534" y="950" width="291" height="27" fill="none" stroke="#111" stroke-width="2" stroke-dasharray="2 2"/><text x="1535" y="970" font-family="Liberation Sans" font-size="18" fill="#111" textLength="120" lengthAdjust="spacingAndGlyphs"  stroke="#111" stroke-width="0.4">Portrait (tiny)</text><path d="M1806 958 L1811 963 L1816 958" fill="none" stroke="#111" stroke-width="2"/><text x="1834" y="970" font-family="Liberation Sans" font-size="18" fill="#111" textLength="65" lengthAdjust="spacingAndGlyphs"  stroke="#111" stroke-width="0.4">90 × 160</text><rect x="1429" y="987" width="158" height="36" fill="#c8c9cd" /><rect x="1430" y="988" width="156" height="34" fill="none" stroke="#111" stroke-width="2" stroke-dasharray="2 2"/><text x="1431" y="1012" font-family="Liberation Sans" font-size="18" fill="#111" textLength="98" lengthAdjust="spacingAndGlyphs"  stroke="#111" stroke-width="0.4">Is Animation</text><rect x="1538" y="993" width="46" height="24" rx="5" fill="#111"/><rect x="1560" y="995" width="22" height="20" fill="#6a655f" /><rect x="1540" y="995" width="22" height="20" rx="4" fill="#cfcfd2"/><text x="1644" y="1012" font-family="Liberation Sans" font-size="18" fill="#111" textLength="72" lengthAdjust="spacingAndGlyphs"  stroke="#111" stroke-width="0.4">0 Frames</text><text x="1832" y="1012" font-family="Liberation Sans" font-size="18" fill="#111" textLength="41" lengthAdjust="spacingAndGlyphs"  stroke="#111" stroke-width="0.4">0 FPS</text><rect x="1597" y="1021" width="121" height="3" fill="#c4bfbb" /><rect x="1752" y="1021" width="122" height="3" fill="#c4bfbb" /><path d="M1726 998 L1731 993 L1736 998" fill="none" stroke="#222" stroke-width="2"/><path d="M1726 1011 L1731 1016 L1736 1011" fill="none" stroke="#999" stroke-width="2"/><path d="M1883 998 L1888 993 L1893 998" fill="none" stroke="#222" stroke-width="2"/><path d="M1883 1011 L1888 1016 L1893 1011" fill="none" stroke="#999" stroke-width="2"/><rect x="1429" y="1033" width="471" height="28" fill="#c8c9cd" /><rect x="1430" y="1034" width="469" height="26" fill="none" stroke="#111" stroke-width="2" stroke-dasharray="2 2"/><text x="1594" y="1053" font-family="Liberation Sans" font-size="18" fill="#111" textLength="138" lengthAdjust="spacingAndGlyphs"  stroke="#111" stroke-width="0.4">EXPORT AS PNG...</text><text x="1600" y="1048" font-family="Liberation Sans" font-size="18" fill="#f2f2f2" textLength="300" lengthAdjust="spacingAndGlyphs" stroke="#3c3c3c" stroke-width="3" paint-order="stroke" stroke-linejoin="round">Playtest Version 0.3B (January 2025)</text><g fill="none" stroke="#dcdcdc" stroke-width="2"><path d="M18 7 H50 M17 8 V32 M51 8 V32 M18 33 H50 M17 34 V40 M51 34 V40 M18 41 H50"/><rect x="21" y="11" width="26" height="18"/></g><rect x="19" y="35" width="5" height="5" fill="#5a2a3a" /><rect x="40" y="36" width="8" height="2" fill="#dcdcdc" /><rect x="25" y="20" width="2" height="2" fill="#dcdcdc" /><rect x="27" y="18" width="2" height="2" fill="#dcdcdc" /><rect x="29" y="16" width="2" height="2" fill="#dcdcdc" /><rect x="31" y="14" width="2" height="2" fill="#dcdcdc" /><rect x="92" y="6" width="4" height="2" fill="#dcdcdc" /><rect x="106" y="6" width="4" height="2" fill="#dcdcdc" /><rect x="90" y="8" width="2" height="2" fill="#dcdcdc" /><rect x="96" y="8" width="2" height="2" fill="#dcdcdc" /><rect x="104" y="8" width="2" height="2" fill="#dcdcdc" /><rect x="110" y="8" width="2" height="2" fill="#dcdcdc" /><rect x="88" y="10" width="2" height="4" fill="#dcdcdc" /><rect x="98" y="10" width="6" height="2" fill="#dcdcdc" /><rect x="112" y="10" width="2" height="4" fill="#dcdcdc" /><rect x="90" y="14" width="2" height="4" fill="#dcdcdc" /><rect x="110" y="14" width="2" height="4" fill="#dcdcdc" /><rect x="86" y="18" width="6" height="2" fill="#dcdcdc" /><rect x="110" y="18" width="6" height="2" fill="#dcdcdc" /><rect x="84" y="20" width="2" height="6" fill="#dcdcdc" /><rect x="116" y="20" width="2" height="6" fill="#dcdcdc" /><rect x="86" y="26" width="6" height="2" fill="#dcdcdc" /><rect x="110" y="26" width="6" height="2" fill="#dcdcdc" /><rect x="90" y="28" width="2" height="4" fill="#dcdcdc" /><rect x="110" y="28" width="2" height="4" fill="#dcdcdc" /><rect x="88" y="32" width="2" height="4" fill="#dcdcdc" /><rect x="112" y="32" width="2" height="4" fill="#dcdcdc" /><rect x="98" y="34" width="6" height="2" fill="#dcdcdc" /><rect x="90" y="36" width="2" height="2" fill="#dcdcdc" /><rect x="96" y="36" width="2" height="2" fill="#dcdcdc" /><rect x="104" y="36" width="2" height="2" fill="#dcdcdc" /><rect x="110" y="36" width="2" height="2" fill="#dcdcdc" /><rect x="92" y="38" width="4" height="2" fill="#dcdcdc" /><rect x="106" y="38" width="4" height="2" fill="#dcdcdc" /><rect x="98" y="16" width="6" height="2" fill="#dcdcdc" /><rect x="96" y="18" width="2" height="2" fill="#dcdcdc" /><rect x="104" y="18" width="2" height="2" fill="#dcdcdc" /><rect x="94" y="20" width="2" height="6" fill="#dcdcdc" /><rect x="106" y="20" width="2" height="6" fill="#dcdcdc" /><rect x="96" y="26" width="2" height="2" fill="#dcdcdc" /><rect x="104" y="26" width="2" height="2" fill="#dcdcdc" /><rect x="98" y="28" width="6" height="2" fill="#dcdcdc" /><rect x="100" y="22" width="2" height="2" fill="#dcdcdc" /><g fill="none" stroke="#dcdcdc" stroke-width="2"><path d="M151 7 H183 V33 L175 41 H151 Z"/><path d="M175 41 V33 H183"/><path d="M164 16 h4 v4 h4 v4 h-4 v4 h-4 v-4 h-4 v-4 h4 z"/></g><path d="M804 4 L822 2 L838 12 L838 34 L826 40 L804 30 Z" fill="#111"/><path d="M806 6 L822 4 L836 13 L836 33 L826 38 L806 29 Z" fill="#3ab4f2"/><path d="M806 16 L826 28 L836 22 M826 28 L826 38" fill="none" stroke="#111" stroke-width="1.6"/><path d="M797 20 L810 26 L812 32 L803 30 L800 36 Z" fill="#f01a50"/><rect x="812" y="38" width="5" height="9" fill="#e8604a" /><rect x="819" y="38" width="5" height="9" fill="#f08a50" /><text x="826" y="29" font-family="Liberation Mono" font-size="11" fill="#111">P</text><rect x="866" y="30" width="48" height="18" fill="#3a5a8a" /><rect x="870" y="33" width="42" height="2" fill="#2c4670" /><rect x="870" y="38" width="42" height="2" fill="#2c4670" /><rect x="870" y="43" width="42" height="2" fill="#2c4670" /><path d="M864 10.7 L878.5 2 L893 10.7 L893 23.75 L878.5 32.45 L864 23.75 Z" fill="#111"/><path d="M866 10.7 L878.5 4 L891 10.7 L878.5 17.950000000000003 Z" fill="#fbe04a"/><path d="M866 11.860000000000001 L877.5 18.82 L877.5 31.0 L866 23.169999999999998 Z" fill="#f0902e"/><path d="M891 11.860000000000001 L879.5 18.82 L879.5 31.0 L891 23.169999999999998 Z" fill="#fbd840"/><rect x="899" y="2" width="18" height="19" fill="#111" /><rect x="901" y="4" width="14" height="15" fill="#f4f4f0" /><path d="M903 10 L907 15 L913 6" fill="none" stroke="#3da262" stroke-width="3"/><path d="M936 30.4 L950.0 22 L964 30.4 L964 43.0 L950.0 51.400000000000006 L936 43.0 Z" fill="#111"/><path d="M938 30.4 L950.0 24 L962 30.4 L950.0 37.400000000000006 Z" fill="#d01a50"/><path d="M938 31.520000000000003 L949.0 38.239999999999995 L949.0 50.0 L938 42.44 Z" fill="#f01a50"/><path d="M962 31.520000000000003 L951.0 38.239999999999995 L951.0 50.0 L962 42.44 Z" fill="#c01848"/><path d="M962 30.4 L976.0 22 L990 30.4 L990 43.0 L976.0 51.400000000000006 L962 43.0 Z" fill="#111"/><path d="M964 30.4 L976.0 24 L988 30.4 L976.0 37.400000000000006 Z" fill="#3da262"/><path d="M964 31.520000000000003 L975.0 38.239999999999995 L975.0 50.0 L964 42.44 Z" fill="#7a7672"/><path d="M988 31.520000000000003 L977.0 38.239999999999995 L977.0 50.0 L988 42.44 Z" fill="#3da262"/><path d="M949 10.4 L963.0 2 L977 10.4 L977 23.0 L963.0 31.400000000000002 L949 23.0 Z" fill="#111"/><path d="M951 10.4 L963.0 4 L975 10.4 L963.0 17.400000000000002 Z" fill="#fbe04a"/><path d="M951 11.520000000000001 L962.0 18.24 L962.0 30.0 L951 22.439999999999998 Z" fill="#f0902e"/><path d="M975 11.520000000000001 L964.0 18.24 L964.0 30.0 L975 22.439999999999998 Z" fill="#fbd840"/><rect x="997" y="0" width="65" height="8" fill="#f0104a" /><rect x="1008" y="5" width="14" height="14" fill="#111" /><rect x="1010" y="7" width="11" height="11" fill="#1a40e0" /><rect x="1022" y="5" width="14" height="14" fill="#111" /><rect x="1024" y="7" width="11" height="11" fill="#3ab4f2" /><rect x="1036" y="5" width="14" height="14" fill="#111" /><rect x="1038" y="7" width="11" height="11" fill="#3da262" /><rect x="1008" y="19" width="14" height="14" fill="#111" /><rect x="1010" y="21" width="11" height="11" fill="#f01a50" /><rect x="1022" y="19" width="14" height="14" fill="#111" /><rect x="1024" y="21" width="11" height="11" fill="#f0902e" /><path d="M1040 31 L1050 34 L1054 46 L1044 45 Z" fill="#6a6560"/><path d="M1037 30 L1046 24 L1057 30 L1052 42 L1040 41 Z" fill="#111"/><path d="M1039 30 L1046 26 L1055 31 L1051 40 L1041 39 Z" fill="#fbe04a"/><path d="M1084 6 Q1084 0 1090 0 H1112 Q1118 0 1118 6 V20 Q1118 26 1112 26 H1096 L1090 32 V26 Q1084 26 1084 20 Z" fill="#f6f2ee"/><path d="M1089 9.6 L1100.0 3 L1111 9.6 L1111 19.5 L1100.0 26.1 L1089 19.5 Z" fill="#111"/><path d="M1091 9.6 L1100.0 5 L1109 9.6 L1100.0 15.100000000000001 Z" fill="#fbe04a"/><path d="M1091 10.48 L1099.0 15.76 L1099.0 25.0 L1091 19.06 Z" fill="#f0902e"/><path d="M1109 10.48 L1101.0 15.76 L1101.0 25.0 L1109 19.06 Z" fill="#fbd840"/><circle cx="1083" cy="29" r="5" fill="#050505"/><path d="M1075 48 V40 Q1075 35 1083 35 Q1091 35 1091 40 V48 Z" fill="#050505"/><circle cx="1109" cy="29" r="5" fill="#050505"/><path d="M1101 48 V40 Q1101 35 1109 35 Q1117 35 1117 40 V48 Z" fill="#050505"/><rect x="1432" y="16" width="12" height="15" fill="#f5ece0" /><path d="M1466 17 L1472 23 L1466 29 M1473 17 L1479 23 L1473 29" fill="none" stroke="#f5ece0" stroke-width="2.5"/><text x="1490" y="30" font-family="Liberation Sans" font-size="18" fill="#f5ece0" textLength="98" lengthAdjust="spacingAndGlyphs"  stroke="#f5ece0" stroke-width="0.4">Cubist Bossa</text><text x="1910" y="20" font-family="Liberation Sans" font-size="18" fill="#ffffff" textLength="113" lengthAdjust="spacingAndGlyphs" text-anchor="end"  stroke="#ffffff" stroke-width="0.4">THU 2025.1.23</text><text x="1910" y="42" font-family="Liberation Sans" font-size="18" fill="#ffffff" textLength="72" lengthAdjust="spacingAndGlyphs" text-anchor="end"  stroke="#ffffff" stroke-width="0.4">08:48 PM</text></svg></body></html>
